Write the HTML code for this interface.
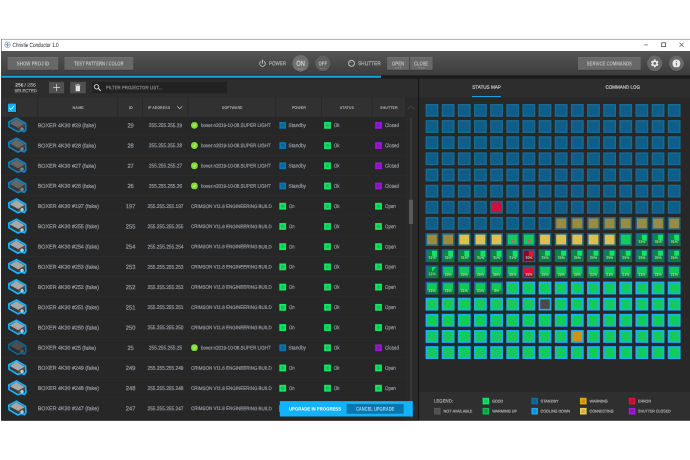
<!DOCTYPE html>
<html><head><meta charset="utf-8"><title>Christie Conductor 1.0</title>
<style>
html,body{margin:0;padding:0;background:#fff;}
body{width:690px;height:460px;overflow:hidden;}
svg#app{will-change:transform;display:block;position:absolute;left:0;top:0;font-family:"Liberation Sans",sans-serif;}
</style></head><body>
<svg id="app" width="690" height="460" viewBox="0 0 690 460">
<defs>
<linearGradient id="tbg" x1="0" y1="0" x2="0" y2="1"><stop offset="0" stop-color="#555555"/><stop offset="1" stop-color="#3c3c3c"/></linearGradient>
<linearGradient id="bandg" x1="0" y1="0" x2="0" y2="1"><stop offset="0" stop-color="#0a8038" stop-opacity="0"/><stop offset="0.5" stop-color="#0a7c36" stop-opacity="0.85"/><stop offset="1" stop-color="#097632"/></linearGradient>
<linearGradient id="bandr" x1="0" y1="0" x2="0" y2="1"><stop offset="0" stop-color="#860a24" stop-opacity="0"/><stop offset="0.5" stop-color="#800a22" stop-opacity="0.85"/><stop offset="1" stop-color="#780820"/></linearGradient>
</defs>
<g id="window">
<rect x="1.2" y="39" width="688.8" height="381.3" fill="#2b2b2b"/>
<rect x="1.2" y="39" width="688.8" height="12" fill="#ffffff"/>
<rect x="1.2" y="38.9" width="688.8" height="0.8" fill="#9a9a9a"/>
<rect x="1.1" y="39" width="0.5" height="381.3" fill="#555"/>
<g transform="translate(4.2 41.5) scale(0.33)"><circle cx="10" cy="10" r="8.6" fill="#fff" stroke="#4a9fd8" stroke-width="2"/><path d="M10 4v12M4 10h12" stroke="#5a5a9a" stroke-width="2.2"/><circle cx="10" cy="10" r="2.4" fill="#e0902a"/></g>
<text x="12.6" y="47" font-size="6.1" fill="#24242c" textLength="46" lengthAdjust="spacingAndGlyphs" transform="rotate(0.04 12.6 47)">Christie Conductor 1.0</text>
<g transform="translate(640 40)" fill="none" stroke-width="0.7"><path d="M4.2 4.9h3.6" stroke="#555"/><rect x="21.7" y="2.8" width="4" height="3.9" stroke="#333"/><path d="M39.5 2.7l4.2 4.2M43.7 2.7l-4.2 4.2" stroke="#222"/></g>
</g>
<g id="toolbar">
<rect x="1.2" y="51" width="688.8" height="24.5" fill="url(#tbg)"/>
<rect x="1.2" y="75.5" width="688.8" height="2.5" fill="#1b1b1b"/>
<rect x="1.2" y="75.7" width="379.8" height="2.1" fill="#12a5e6"/>
<rect x="7.6" y="69" width="50.6" height="1.35" fill="#303030"/>
<rect x="7.6" y="57.1" width="50.6" height="12.75" fill="#686868"/>
<rect x="7.6" y="57.1" width="50.6" height="0.6" fill="#7a7a7a"/>
<text x="16.8" y="65.5" font-size="5.8" fill="#bcbcbc" font-weight="bold" textLength="32.4" lengthAdjust="spacingAndGlyphs" transform="rotate(0.04 16.8 65.5)">SHOW PROJ ID</text>
<rect x="64.4" y="69" width="68.8" height="1.35" fill="#303030"/>
<rect x="64.4" y="57.1" width="68.8" height="12.75" fill="#686868"/>
<rect x="64.4" y="57.1" width="68.8" height="0.6" fill="#7a7a7a"/>
<text x="74" y="65.5" font-size="5.8" fill="#bcbcbc" font-weight="bold" textLength="49.6" lengthAdjust="spacingAndGlyphs" transform="rotate(0.04 74 65.5)">TEST PATTERN / COLOR</text>
<rect x="387.1" y="69" width="21.9" height="1.35" fill="#303030"/>
<rect x="387.1" y="57.1" width="21.9" height="12.75" fill="#686868"/>
<rect x="387.1" y="57.1" width="21.9" height="0.6" fill="#7a7a7a"/>
<text x="392" y="65.5" font-size="5.8" fill="#bcbcbc" font-weight="bold" textLength="12.2" lengthAdjust="spacingAndGlyphs" transform="rotate(0.04 392 65.5)">OPEN</text>
<rect x="395.3" y="67.5" width="1.2" height="0.85" fill="#a4a4a4"/>
<rect x="397.65" y="67.5" width="1.2" height="0.85" fill="#a4a4a4"/>
<rect x="400" y="67.5" width="1.2" height="0.85" fill="#a4a4a4"/>
<rect x="410.1" y="69" width="22.5" height="1.35" fill="#303030"/>
<rect x="410.1" y="57.1" width="22.5" height="12.75" fill="#686868"/>
<rect x="410.1" y="57.1" width="22.5" height="0.6" fill="#7a7a7a"/>
<text x="414" y="65.5" font-size="5.8" fill="#bcbcbc" font-weight="bold" textLength="14.1" lengthAdjust="spacingAndGlyphs" transform="rotate(0.04 414 65.5)">CLOSE</text>
<rect x="418.6" y="67.5" width="1.2" height="0.85" fill="#a4a4a4"/>
<rect x="420.95" y="67.5" width="1.2" height="0.85" fill="#a4a4a4"/>
<rect x="423.3" y="67.5" width="1.2" height="0.85" fill="#a4a4a4"/>
<rect x="578" y="69" width="62.7" height="1.35" fill="#303030"/>
<rect x="578" y="57.1" width="62.7" height="12.75" fill="#686868"/>
<rect x="578" y="57.1" width="62.7" height="0.6" fill="#7a7a7a"/>
<text x="586.8" y="65.5" font-size="5.8" fill="#bcbcbc" font-weight="bold" textLength="45" lengthAdjust="spacingAndGlyphs" transform="rotate(0.04 586.8 65.5)">SERVICE COMMANDS</text>
<g transform="translate(262.5 63.5)" fill="none" stroke="#d4d4d4" stroke-width="0.85" stroke-linecap="round"><path d="M-1.6 -2.3A2.85 2.85 0 1 0 1.6 -2.3"/><path d="M0 -3.4V-0.3"/></g>
<text x="268.9" y="65.33" font-size="5.6" fill="#a8a8a8" stroke="#a8a8a8" stroke-width="0.22" textLength="17.2" lengthAdjust="spacingAndGlyphs" transform="rotate(0.04 268.9 65.33)">POWER</text>
<circle cx="300.6" cy="63.9" r="8.5" fill="#2a2a2a" opacity="0.5"/>
<circle cx="300.6" cy="63.4" r="8.3" fill="#707070"/>
<text x="296.3" y="65.98" font-size="7.8" fill="#cccccc" font-weight="bold" textLength="8.7" lengthAdjust="spacingAndGlyphs" transform="rotate(0.04 296.3 65.98)">ON</text>
<rect x="298" y="68.5" width="1" height="0.8" fill="#999"/>
<rect x="300.1" y="68.5" width="1" height="0.8" fill="#999"/>
<rect x="302.2" y="68.5" width="1" height="0.8" fill="#999"/>
<circle cx="322.8" cy="63.9" r="8" fill="#2a2a2a" opacity="0.5"/>
<circle cx="322.8" cy="63.4" r="7.8" fill="#5f5f5f"/>
<text x="318.6" y="65.6" font-size="5.8" fill="#c4c4c4" font-weight="bold" textLength="8.4" lengthAdjust="spacingAndGlyphs" transform="rotate(0.04 318.6 65.6)">OFF</text>
<rect x="320.1" y="68.2" width="1" height="0.8" fill="#8a8a8a"/>
<rect x="322.3" y="68.2" width="1" height="0.8" fill="#8a8a8a"/>
<rect x="324.5" y="68.2" width="1" height="0.8" fill="#8a8a8a"/>
<circle cx="351.5" cy="63.35" r="3" fill="none" stroke="#d6d6d6" stroke-width="0.95"/><path d="M350.300 62.100l1.200 0.700" stroke="#d6d6d6" stroke-width="0.5"/>
<text x="357.9" y="65.19" font-size="5.5" fill="#a6a6a6" stroke="#a6a6a6" stroke-width="0.22" textLength="22.9" lengthAdjust="spacingAndGlyphs" transform="rotate(0.04 357.9 65.19)">SHUTTER</text>
<circle cx="654.75" cy="63.9" r="8" fill="#2a2a2a" opacity="0.5"/>
<circle cx="654.75" cy="63.4" r="7.8" fill="#686868"/>
<g transform="translate(649.95 58.6) scale(0.4)"><path fill="#e8e8e8" d="M19.14 12.94c.04-.3.06-.61.06-.94 0-.32-.02-.64-.07-.94l2.03-1.58a.49.49 0 0 0 .12-.61l-1.92-3.32a.488.488 0 0 0-.59-.22l-2.39.96c-.5-.38-1.03-.7-1.62-.94l-.36-2.54a.484.484 0 0 0-.48-.41h-3.84c-.24 0-.43.17-.47.41l-.36 2.54c-.59.24-1.13.57-1.62.94l-2.39-.96c-.22-.08-.47 0-.59.22L2.74 8.87c-.12.21-.08.47.12.61l2.03 1.58c-.05.3-.09.63-.09.94s.02.64.07.94l-2.03 1.58a.49.49 0 0 0-.12.61l1.92 3.32c.12.22.37.29.59.22l2.39-.96c.5.38 1.03.7 1.62.94l.36 2.54c.05.24.24.41.48.41h3.84c.24 0 .44-.17.47-.41l.36-2.54c.59-.24 1.13-.56 1.62-.94l2.39.96c.22.08.47 0 .59-.22l1.92-3.32c.12-.22.07-.47-.12-.61l-2.01-1.58zM12 15.6c-1.98 0-3.6-1.62-3.6-3.6s1.62-3.6 3.6-3.6 3.6 1.62 3.6 3.6-1.62 3.6-3.6 3.6z"/></g>
<circle cx="676.4" cy="63.9" r="7.9" fill="#2a2a2a" opacity="0.5"/>
<circle cx="676.4" cy="63.4" r="7.7" fill="#686868"/>
<circle cx="676.4" cy="63.4" r="3.9" fill="#e8e8e8"/>
<rect x="675.95" y="62.9" width="0.9" height="2.6" fill="#686868"/>
<rect x="675.95" y="61.2" width="0.9" height="0.9" fill="#686868"/>
</g>
<g id="projector-list">
<rect x="1.2" y="78" width="416.9" height="342.3" fill="#2d2d2d"/>
<text x="15.3" y="86.52" font-size="4.7" fill="#cfcfcf" font-weight="bold" textLength="8.1" lengthAdjust="spacingAndGlyphs" transform="rotate(0.04 15.3 86.52)">256</text>
<text x="24.5" y="86.52" font-size="4.7" fill="#9c9c9c" stroke="#9c9c9c" stroke-width="0.22" textLength="11.3" lengthAdjust="spacingAndGlyphs" transform="rotate(0.04 24.5 86.52)">/ 256</text>
<text x="14.4" y="92.28" font-size="4.6" fill="#9c9c9c" stroke="#9c9c9c" stroke-width="0.22" textLength="22.5" lengthAdjust="spacingAndGlyphs" transform="rotate(0.04 14.4 92.28)">SELECTED</text>
<rect x="49.05" y="81.9" width="15.05" height="11.4" fill="#505050"/>
<rect x="53.1" y="87.25" width="7" height="0.75" fill="#dcdcdc"/>
<rect x="56.22" y="84.1" width="0.75" height="7.1" fill="#dcdcdc"/>
<rect x="70.2" y="81.9" width="15.6" height="11.4" fill="#505050"/>
<path transform="translate(74.9 84.3) scale(0.485 0.46)" fill="#e0e0e0" d="M1.5 3.5h9v10.300q0 1.200-1.200 1.200h-6.600q-1.200 0-1.200-1.200zM0.600 1.200h3.200l0.700-1.200h3l0.700 1.200h3.200v1.500h-10.800z"/>
<rect x="92.2" y="82.2" width="134.7" height="10.9" fill="#222222"/>
<g transform="translate(93.3 83.5) scale(0.58)" fill="none" stroke="#e8e8e8"><circle cx="5.6" cy="5.6" r="3.9" stroke-width="1.5"/><path d="M8.600 8.600l4.200 4.200" stroke-width="1.8"/></g>
<text x="106.1" y="89.15" font-size="4.8" fill="#7e8084" stroke="#7e8084" stroke-width="0.22" textLength="55.9" lengthAdjust="spacingAndGlyphs" transform="rotate(0.04 106.1 89.15)">FILTER PROJECTOR LIST...</text>
<rect x="1.2" y="97.4" width="404" height="19.6" fill="#313131"/>
<rect x="37.3" y="97.4" width="0.8" height="19.6" fill="#282828"/>
<rect x="117.3" y="97.4" width="0.8" height="19.6" fill="#282828"/>
<rect x="142.1" y="97.4" width="0.8" height="19.6" fill="#282828"/>
<rect x="187.7" y="97.4" width="0.8" height="19.6" fill="#282828"/>
<rect x="275.25" y="97.4" width="0.8" height="19.6" fill="#282828"/>
<rect x="321" y="97.4" width="0.8" height="19.6" fill="#282828"/>
<rect x="371.8" y="97.4" width="0.8" height="19.6" fill="#282828"/>
<rect x="7.2" y="102.9" width="9.4" height="9.7" fill="#221a18" rx="1"/>
<rect x="7.8" y="103.5" width="8.2" height="8.5" fill="#14aef6" rx="0.6"/>
<path d="M9.200 108.100L11.100 109.500L14 105.800" stroke="#fff" stroke-width="1" fill="none"/>
<text x="72.6" y="109.03" font-size="4" fill="#aaaaaa" font-weight="bold" textLength="11.3" lengthAdjust="spacingAndGlyphs" transform="rotate(0.04 72.6 109.03)">NAME</text>
<text x="128.9" y="109.03" font-size="4" fill="#aaaaaa" font-weight="bold" textLength="3.8" lengthAdjust="spacingAndGlyphs" transform="rotate(0.04 128.9 109.03)">ID</text>
<text x="147.9" y="109.03" font-size="4" fill="#aaaaaa" font-weight="bold" textLength="22.2" lengthAdjust="spacingAndGlyphs" transform="rotate(0.04 147.9 109.03)">IP ADDRESS</text>
<path d="M177.400 106.300l2.350 2.500 2.350-2.500" stroke="#d8d8d8" stroke-width="0.85" fill="none"/>
<text x="221.7" y="109.03" font-size="4" fill="#aaaaaa" font-weight="bold" textLength="20.9" lengthAdjust="spacingAndGlyphs" transform="rotate(0.04 221.7 109.03)">SOFTWARE</text>
<text x="291.9" y="109.03" font-size="4" fill="#aaaaaa" font-weight="bold" textLength="14" lengthAdjust="spacingAndGlyphs" transform="rotate(0.04 291.9 109.03)">POWER</text>
<text x="339.7" y="109.03" font-size="4" fill="#aaaaaa" font-weight="bold" textLength="14.2" lengthAdjust="spacingAndGlyphs" transform="rotate(0.04 339.7 109.03)">STATUS</text>
<text x="380" y="109.03" font-size="4" fill="#aaaaaa" font-weight="bold" textLength="17.7" lengthAdjust="spacingAndGlyphs" transform="rotate(0.04 380 109.03)">SHUTTER</text>
<rect x="1.2" y="117" width="404" height="303.3" fill="#272727"/>
<rect x="405.2" y="97.4" width="12.9" height="322.9" fill="#2a2a2a"/>
<rect x="410.5" y="117.4" width="1.2" height="301.4" fill="#424242"/>
<rect x="409" y="199.8" width="4" height="24.2" fill="#595959"/>
<path d="M407.600 109.700l3.700-3.800 3.700 3.800" stroke="#565656" stroke-width="0.7" fill="none"/>
<g id="row-29">
<g transform="translate(0 125.5)"><path d="M16.5 -7.3L25.4 -2.1L25.8 3.9L24.4 6.1L21.3 4.9L17.9 6.3L9.1 1.1L8.9 -3.3Z" fill="#232323" stroke="#1180b8" stroke-width="1.9" stroke-linejoin="round"/><path d="M9.7 -2.2L18.1 2.5L18.1 5.3L9.8 0.7Z" fill="#363636"/><path d="M18.1 2.5L24.6 -1.4L24.6 1.3L18.1 5.3Z" fill="#424242"/><path d="M16.3 -6.3L24.6 -1.4L18.1 2.5L9.7 -2.2Z" fill="#666666"/><circle cx="22.1" cy="3.4" r="1.75" fill="#888888"/><circle cx="22.8" cy="3.9" r="0.8" fill="#1180b8" opacity="0.5"/></g>
<text x="37.8" y="127.19" font-size="5.5" fill="#8d9197" stroke="#8d9197" stroke-width="0.22" textLength="58.2" lengthAdjust="spacingAndGlyphs" transform="rotate(0.04 37.8 127.19)">BOXER 4K30 #29 (fake)</text>
<text x="127.4" y="127.46" font-size="6" fill="#8d9197" stroke="#8d9197" stroke-width="0.22" textLength="6.4" lengthAdjust="spacingAndGlyphs" transform="rotate(0.04 127.4 127.46)">29</text>
<text x="148.8" y="127.12" font-size="5.3" fill="#8d9197" stroke="#8d9197" stroke-width="0.22" textLength="33.4" lengthAdjust="spacingAndGlyphs" transform="rotate(0.04 148.8 127.12)">255.255.255.29</text>
<circle cx="194.4" cy="125.3" r="4.1" fill="#1d1a20"/>
<circle cx="194.4" cy="125.3" r="3.4" fill="#84dc36"/>
<path transform="translate(192.3 123.15) scale(0.35)" d="M2.600 6.400l2.300 2.300 4.500-5.200" stroke="#eefbe0" stroke-width="1.9" fill="none"/>
<text x="201" y="127.09" font-size="5.2" fill="#8d9197" stroke="#8d9197" stroke-width="0.22" textLength="69.9" lengthAdjust="spacingAndGlyphs" transform="rotate(0.04 201 127.09)">boxer.n2019-10-08.SUPER LIGHT</text>
<rect x="279.3" y="121.95" width="6.8" height="6.8" fill="#1074a8"/>
<rect x="281" y="123.65" width="3.4" height="3.4" fill="#0d6392"/>
<text x="288.6" y="127.06" font-size="5.4" fill="#8d9197" stroke="#8d9197" stroke-width="0.22" textLength="17.4" lengthAdjust="spacingAndGlyphs" transform="rotate(0.04 288.6 127.06)">Standby</text>
<rect x="324.1" y="121.95" width="6.8" height="6.8" fill="#14e666"/>
<rect x="325.8" y="123.65" width="3.4" height="3.4" fill="#11c458"/>
<text x="333.8" y="127.06" font-size="5.4" fill="#8d9197" stroke="#8d9197" stroke-width="0.22" textLength="5.7" lengthAdjust="spacingAndGlyphs" transform="rotate(0.04 333.8 127.06)">Ok</text>
<rect x="375.1" y="121.95" width="6.8" height="6.8" fill="#9a18d8"/>
<rect x="376.8" y="123.65" width="3.4" height="3.4" fill="#8414bc"/>
<text x="385" y="127.06" font-size="5.4" fill="#8d9197" stroke="#8d9197" stroke-width="0.22" textLength="13.9" lengthAdjust="spacingAndGlyphs" transform="rotate(0.04 385 127.06)">Closed</text>
</g>
<g id="row-28">
<rect x="1.2" y="134.76" width="404" height="0.6" fill="#2f2f2f"/>
<g transform="translate(0 145.72)"><path d="M16.5 -7.3L25.4 -2.1L25.8 3.9L24.4 6.1L21.3 4.9L17.9 6.3L9.1 1.1L8.9 -3.3Z" fill="#232323" stroke="#1180b8" stroke-width="1.9" stroke-linejoin="round"/><path d="M9.7 -2.2L18.1 2.5L18.1 5.3L9.8 0.7Z" fill="#363636"/><path d="M18.1 2.5L24.6 -1.4L24.6 1.3L18.1 5.3Z" fill="#424242"/><path d="M16.3 -6.3L24.6 -1.4L18.1 2.5L9.7 -2.2Z" fill="#666666"/><circle cx="22.1" cy="3.4" r="1.75" fill="#888888"/><circle cx="22.8" cy="3.9" r="0.8" fill="#1180b8" opacity="0.5"/></g>
<text x="37.8" y="147.41" font-size="5.5" fill="#8d9197" stroke="#8d9197" stroke-width="0.22" textLength="58.2" lengthAdjust="spacingAndGlyphs" transform="rotate(0.04 37.8 147.41)">BOXER 4K30 #28 (fake)</text>
<text x="127.4" y="147.68" font-size="6" fill="#8d9197" stroke="#8d9197" stroke-width="0.22" textLength="6.4" lengthAdjust="spacingAndGlyphs" transform="rotate(0.04 127.4 147.68)">28</text>
<text x="148.8" y="147.34" font-size="5.3" fill="#8d9197" stroke="#8d9197" stroke-width="0.22" textLength="33.4" lengthAdjust="spacingAndGlyphs" transform="rotate(0.04 148.8 147.34)">255.255.255.28</text>
<circle cx="194.4" cy="145.52" r="4.1" fill="#1d1a20"/>
<circle cx="194.4" cy="145.52" r="3.4" fill="#84dc36"/>
<path transform="translate(192.3 143.37) scale(0.35)" d="M2.600 6.400l2.300 2.300 4.500-5.200" stroke="#eefbe0" stroke-width="1.9" fill="none"/>
<text x="201" y="147.31" font-size="5.2" fill="#8d9197" stroke="#8d9197" stroke-width="0.22" textLength="69.9" lengthAdjust="spacingAndGlyphs" transform="rotate(0.04 201 147.31)">boxer.n2019-10-08.SUPER LIGHT</text>
<rect x="279.3" y="142.17" width="6.8" height="6.8" fill="#1074a8"/>
<rect x="281" y="143.87" width="3.4" height="3.4" fill="#0d6392"/>
<text x="288.6" y="147.28" font-size="5.4" fill="#8d9197" stroke="#8d9197" stroke-width="0.22" textLength="17.4" lengthAdjust="spacingAndGlyphs" transform="rotate(0.04 288.6 147.28)">Standby</text>
<rect x="324.1" y="142.17" width="6.8" height="6.8" fill="#14e666"/>
<rect x="325.8" y="143.87" width="3.4" height="3.4" fill="#11c458"/>
<text x="333.8" y="147.28" font-size="5.4" fill="#8d9197" stroke="#8d9197" stroke-width="0.22" textLength="5.7" lengthAdjust="spacingAndGlyphs" transform="rotate(0.04 333.8 147.28)">Ok</text>
<rect x="375.1" y="142.17" width="6.8" height="6.8" fill="#9a18d8"/>
<rect x="376.8" y="143.87" width="3.4" height="3.4" fill="#8414bc"/>
<text x="385" y="147.28" font-size="5.4" fill="#8d9197" stroke="#8d9197" stroke-width="0.22" textLength="13.9" lengthAdjust="spacingAndGlyphs" transform="rotate(0.04 385 147.28)">Closed</text>
</g>
<g id="row-27">
<rect x="1.2" y="154.98" width="404" height="0.6" fill="#2f2f2f"/>
<g transform="translate(0 165.94)"><path d="M16.5 -7.3L25.4 -2.1L25.8 3.9L24.4 6.1L21.3 4.9L17.9 6.3L9.1 1.1L8.9 -3.3Z" fill="#232323" stroke="#1180b8" stroke-width="1.9" stroke-linejoin="round"/><path d="M9.7 -2.2L18.1 2.5L18.1 5.3L9.8 0.7Z" fill="#363636"/><path d="M18.1 2.5L24.6 -1.4L24.6 1.3L18.1 5.3Z" fill="#424242"/><path d="M16.3 -6.3L24.6 -1.4L18.1 2.5L9.7 -2.2Z" fill="#666666"/><circle cx="22.1" cy="3.4" r="1.75" fill="#888888"/><circle cx="22.8" cy="3.9" r="0.8" fill="#1180b8" opacity="0.5"/></g>
<text x="37.8" y="167.63" font-size="5.5" fill="#8d9197" stroke="#8d9197" stroke-width="0.22" textLength="58.2" lengthAdjust="spacingAndGlyphs" transform="rotate(0.04 37.8 167.63)">BOXER 4K30 #27 (fake)</text>
<text x="127.4" y="167.9" font-size="6" fill="#8d9197" stroke="#8d9197" stroke-width="0.22" textLength="6.4" lengthAdjust="spacingAndGlyphs" transform="rotate(0.04 127.4 167.9)">27</text>
<text x="148.8" y="167.56" font-size="5.3" fill="#8d9197" stroke="#8d9197" stroke-width="0.22" textLength="33.4" lengthAdjust="spacingAndGlyphs" transform="rotate(0.04 148.8 167.56)">255.255.255.27</text>
<circle cx="194.4" cy="165.74" r="4.1" fill="#1d1a20"/>
<circle cx="194.4" cy="165.74" r="3.4" fill="#84dc36"/>
<path transform="translate(192.3 163.59) scale(0.35)" d="M2.600 6.400l2.300 2.300 4.500-5.200" stroke="#eefbe0" stroke-width="1.9" fill="none"/>
<text x="201" y="167.53" font-size="5.2" fill="#8d9197" stroke="#8d9197" stroke-width="0.22" textLength="69.9" lengthAdjust="spacingAndGlyphs" transform="rotate(0.04 201 167.53)">boxer.n2019-10-08.SUPER LIGHT</text>
<rect x="279.3" y="162.39" width="6.8" height="6.8" fill="#1074a8"/>
<rect x="281" y="164.09" width="3.4" height="3.4" fill="#0d6392"/>
<text x="288.6" y="167.5" font-size="5.4" fill="#8d9197" stroke="#8d9197" stroke-width="0.22" textLength="17.4" lengthAdjust="spacingAndGlyphs" transform="rotate(0.04 288.6 167.5)">Standby</text>
<rect x="324.1" y="162.39" width="6.8" height="6.8" fill="#14e666"/>
<rect x="325.8" y="164.09" width="3.4" height="3.4" fill="#11c458"/>
<text x="333.8" y="167.5" font-size="5.4" fill="#8d9197" stroke="#8d9197" stroke-width="0.22" textLength="5.7" lengthAdjust="spacingAndGlyphs" transform="rotate(0.04 333.8 167.5)">Ok</text>
<rect x="375.1" y="162.39" width="6.8" height="6.8" fill="#9a18d8"/>
<rect x="376.8" y="164.09" width="3.4" height="3.4" fill="#8414bc"/>
<text x="385" y="167.5" font-size="5.4" fill="#8d9197" stroke="#8d9197" stroke-width="0.22" textLength="13.9" lengthAdjust="spacingAndGlyphs" transform="rotate(0.04 385 167.5)">Closed</text>
</g>
<g id="row-26">
<rect x="1.2" y="175.2" width="404" height="0.6" fill="#2f2f2f"/>
<g transform="translate(0 186.16)"><path d="M16.5 -7.3L25.4 -2.1L25.8 3.9L24.4 6.1L21.3 4.9L17.9 6.3L9.1 1.1L8.9 -3.3Z" fill="#232323" stroke="#1180b8" stroke-width="1.9" stroke-linejoin="round"/><path d="M9.7 -2.2L18.1 2.5L18.1 5.3L9.8 0.7Z" fill="#363636"/><path d="M18.1 2.5L24.6 -1.4L24.6 1.3L18.1 5.3Z" fill="#424242"/><path d="M16.3 -6.3L24.6 -1.4L18.1 2.5L9.7 -2.2Z" fill="#666666"/><circle cx="22.1" cy="3.4" r="1.75" fill="#888888"/><circle cx="22.8" cy="3.9" r="0.8" fill="#1180b8" opacity="0.5"/></g>
<text x="37.8" y="187.85" font-size="5.5" fill="#8d9197" stroke="#8d9197" stroke-width="0.22" textLength="58.2" lengthAdjust="spacingAndGlyphs" transform="rotate(0.04 37.8 187.85)">BOXER 4K30 #26 (fake)</text>
<text x="127.4" y="188.12" font-size="6" fill="#8d9197" stroke="#8d9197" stroke-width="0.22" textLength="6.4" lengthAdjust="spacingAndGlyphs" transform="rotate(0.04 127.4 188.12)">26</text>
<text x="148.8" y="187.78" font-size="5.3" fill="#8d9197" stroke="#8d9197" stroke-width="0.22" textLength="33.4" lengthAdjust="spacingAndGlyphs" transform="rotate(0.04 148.8 187.78)">255.255.255.26</text>
<circle cx="194.4" cy="185.96" r="4.1" fill="#1d1a20"/>
<circle cx="194.4" cy="185.96" r="3.4" fill="#84dc36"/>
<path transform="translate(192.3 183.81) scale(0.35)" d="M2.600 6.400l2.300 2.300 4.500-5.200" stroke="#eefbe0" stroke-width="1.9" fill="none"/>
<text x="201" y="187.75" font-size="5.2" fill="#8d9197" stroke="#8d9197" stroke-width="0.22" textLength="69.9" lengthAdjust="spacingAndGlyphs" transform="rotate(0.04 201 187.75)">boxer.n2019-10-08.SUPER LIGHT</text>
<rect x="279.3" y="182.61" width="6.8" height="6.8" fill="#1074a8"/>
<rect x="281" y="184.31" width="3.4" height="3.4" fill="#0d6392"/>
<text x="288.6" y="187.72" font-size="5.4" fill="#8d9197" stroke="#8d9197" stroke-width="0.22" textLength="17.4" lengthAdjust="spacingAndGlyphs" transform="rotate(0.04 288.6 187.72)">Standby</text>
<rect x="324.1" y="182.61" width="6.8" height="6.8" fill="#14e666"/>
<rect x="325.8" y="184.31" width="3.4" height="3.4" fill="#11c458"/>
<text x="333.8" y="187.72" font-size="5.4" fill="#8d9197" stroke="#8d9197" stroke-width="0.22" textLength="5.7" lengthAdjust="spacingAndGlyphs" transform="rotate(0.04 333.8 187.72)">Ok</text>
<rect x="375.1" y="182.61" width="6.8" height="6.8" fill="#9a18d8"/>
<rect x="376.8" y="184.31" width="3.4" height="3.4" fill="#8414bc"/>
<text x="385" y="187.72" font-size="5.4" fill="#8d9197" stroke="#8d9197" stroke-width="0.22" textLength="13.9" lengthAdjust="spacingAndGlyphs" transform="rotate(0.04 385 187.72)">Closed</text>
</g>
<g id="row-197">
<rect x="1.2" y="195.42" width="404" height="0.6" fill="#2f2f2f"/>
<g transform="translate(0 206.38)"><path d="M16.5 -7.3L25.4 -2.1L25.8 3.9L24.4 6.1L21.3 4.9L17.9 6.3L9.1 1.1L8.9 -3.3Z" fill="#232323" stroke="#18b2fa" stroke-width="1.9" stroke-linejoin="round"/><path d="M9.7 -2.2L18.1 2.5L18.1 5.3L9.8 0.7Z" fill="#3c3c3c"/><path d="M18.1 2.5L24.6 -1.4L24.6 1.3L18.1 5.3Z" fill="#505050"/><path d="M16.3 -6.3L24.6 -1.4L18.1 2.5L9.7 -2.2Z" fill="#a8a8a8"/><circle cx="22.1" cy="3.4" r="1.75" fill="#cfcfcf"/><circle cx="22.8" cy="3.9" r="0.8" fill="#18b2fa" opacity="0.5"/></g>
<text x="37.8" y="208.07" font-size="5.5" fill="#8d9197" stroke="#8d9197" stroke-width="0.22" textLength="61.17" lengthAdjust="spacingAndGlyphs" transform="rotate(0.04 37.8 208.07)">BOXER 4K30 #197 (fake)</text>
<text x="125.8" y="208.34" font-size="6" fill="#8d9197" stroke="#8d9197" stroke-width="0.22" textLength="9.6" lengthAdjust="spacingAndGlyphs" transform="rotate(0.04 125.8 208.34)">197</text>
<text x="147.46" y="208" font-size="5.3" fill="#8d9197" stroke="#8d9197" stroke-width="0.22" textLength="36.07" lengthAdjust="spacingAndGlyphs" transform="rotate(0.04 147.46 208)">255.255.255.197</text>
<text x="191.1" y="207.9" font-size="5" fill="#8d9197" stroke="#8d9197" stroke-width="0.22" textLength="80.7" lengthAdjust="spacingAndGlyphs" transform="rotate(0.04 191.1 207.9)">CRIMSON V11.8 ENGINEERING BUILD</text>
<rect x="279.3" y="202.83" width="6.8" height="6.8" fill="#14e666"/>
<rect x="281" y="204.53" width="3.4" height="3.4" fill="#11c458"/>
<text x="288.9" y="207.94" font-size="5.4" fill="#8d9197" stroke="#8d9197" stroke-width="0.22" textLength="5.6" lengthAdjust="spacingAndGlyphs" transform="rotate(0.04 288.9 207.94)">On</text>
<rect x="324.1" y="202.83" width="6.8" height="6.8" fill="#14e666"/>
<rect x="325.8" y="204.53" width="3.4" height="3.4" fill="#11c458"/>
<text x="333.8" y="207.94" font-size="5.4" fill="#8d9197" stroke="#8d9197" stroke-width="0.22" textLength="5.7" lengthAdjust="spacingAndGlyphs" transform="rotate(0.04 333.8 207.94)">Ok</text>
<rect x="375.1" y="202.83" width="6.8" height="6.8" fill="#14e666"/>
<rect x="376.8" y="204.53" width="3.4" height="3.4" fill="#11c458"/>
<text x="385" y="207.94" font-size="5.4" fill="#8d9197" stroke="#8d9197" stroke-width="0.22" textLength="10.8" lengthAdjust="spacingAndGlyphs" transform="rotate(0.04 385 207.94)">Open</text>
</g>
<g id="row-255">
<rect x="1.2" y="215.64" width="404" height="0.6" fill="#2f2f2f"/>
<g transform="translate(0 226.6)"><path d="M16.5 -7.3L25.4 -2.1L25.8 3.9L24.4 6.1L21.3 4.9L17.9 6.3L9.1 1.1L8.9 -3.3Z" fill="#232323" stroke="#18b2fa" stroke-width="1.9" stroke-linejoin="round"/><path d="M9.7 -2.2L18.1 2.5L18.1 5.3L9.8 0.7Z" fill="#3c3c3c"/><path d="M18.1 2.5L24.6 -1.4L24.6 1.3L18.1 5.3Z" fill="#505050"/><path d="M16.3 -6.3L24.6 -1.4L18.1 2.5L9.7 -2.2Z" fill="#a8a8a8"/><circle cx="22.1" cy="3.4" r="1.75" fill="#cfcfcf"/><circle cx="22.8" cy="3.9" r="0.8" fill="#18b2fa" opacity="0.5"/></g>
<text x="37.8" y="228.29" font-size="5.5" fill="#8d9197" stroke="#8d9197" stroke-width="0.22" textLength="61.17" lengthAdjust="spacingAndGlyphs" transform="rotate(0.04 37.8 228.29)">BOXER 4K30 #255 (fake)</text>
<text x="125.8" y="228.56" font-size="6" fill="#8d9197" stroke="#8d9197" stroke-width="0.22" textLength="9.6" lengthAdjust="spacingAndGlyphs" transform="rotate(0.04 125.8 228.56)">255</text>
<text x="147.46" y="228.22" font-size="5.3" fill="#8d9197" stroke="#8d9197" stroke-width="0.22" textLength="36.07" lengthAdjust="spacingAndGlyphs" transform="rotate(0.04 147.46 228.22)">255.255.255.255</text>
<text x="191.1" y="228.12" font-size="5" fill="#8d9197" stroke="#8d9197" stroke-width="0.22" textLength="80.7" lengthAdjust="spacingAndGlyphs" transform="rotate(0.04 191.1 228.12)">CRIMSON V11.8 ENGINEERING BUILD</text>
<rect x="279.3" y="223.05" width="6.8" height="6.8" fill="#14e666"/>
<rect x="281" y="224.75" width="3.4" height="3.4" fill="#11c458"/>
<text x="288.9" y="228.16" font-size="5.4" fill="#8d9197" stroke="#8d9197" stroke-width="0.22" textLength="5.6" lengthAdjust="spacingAndGlyphs" transform="rotate(0.04 288.9 228.16)">On</text>
<rect x="324.1" y="223.05" width="6.8" height="6.8" fill="#14e666"/>
<rect x="325.8" y="224.75" width="3.4" height="3.4" fill="#11c458"/>
<text x="333.8" y="228.16" font-size="5.4" fill="#8d9197" stroke="#8d9197" stroke-width="0.22" textLength="5.7" lengthAdjust="spacingAndGlyphs" transform="rotate(0.04 333.8 228.16)">Ok</text>
<rect x="375.1" y="223.05" width="6.8" height="6.8" fill="#14e666"/>
<rect x="376.8" y="224.75" width="3.4" height="3.4" fill="#11c458"/>
<text x="385" y="228.16" font-size="5.4" fill="#8d9197" stroke="#8d9197" stroke-width="0.22" textLength="10.8" lengthAdjust="spacingAndGlyphs" transform="rotate(0.04 385 228.16)">Open</text>
</g>
<g id="row-254">
<rect x="1.2" y="235.86" width="404" height="0.6" fill="#2f2f2f"/>
<g transform="translate(0 246.82)"><path d="M16.5 -7.3L25.4 -2.1L25.8 3.9L24.4 6.1L21.3 4.9L17.9 6.3L9.1 1.1L8.9 -3.3Z" fill="#232323" stroke="#18b2fa" stroke-width="1.9" stroke-linejoin="round"/><path d="M9.7 -2.2L18.1 2.5L18.1 5.3L9.8 0.7Z" fill="#3c3c3c"/><path d="M18.1 2.5L24.6 -1.4L24.6 1.3L18.1 5.3Z" fill="#505050"/><path d="M16.3 -6.3L24.6 -1.4L18.1 2.5L9.7 -2.2Z" fill="#a8a8a8"/><circle cx="22.1" cy="3.4" r="1.75" fill="#cfcfcf"/><circle cx="22.8" cy="3.9" r="0.8" fill="#18b2fa" opacity="0.5"/></g>
<text x="37.8" y="248.51" font-size="5.5" fill="#8d9197" stroke="#8d9197" stroke-width="0.22" textLength="61.17" lengthAdjust="spacingAndGlyphs" transform="rotate(0.04 37.8 248.51)">BOXER 4K30 #254 (fake)</text>
<text x="125.8" y="248.78" font-size="6" fill="#8d9197" stroke="#8d9197" stroke-width="0.22" textLength="9.6" lengthAdjust="spacingAndGlyphs" transform="rotate(0.04 125.8 248.78)">254</text>
<text x="147.46" y="248.44" font-size="5.3" fill="#8d9197" stroke="#8d9197" stroke-width="0.22" textLength="36.07" lengthAdjust="spacingAndGlyphs" transform="rotate(0.04 147.46 248.44)">255.255.255.254</text>
<text x="191.1" y="248.34" font-size="5" fill="#8d9197" stroke="#8d9197" stroke-width="0.22" textLength="80.7" lengthAdjust="spacingAndGlyphs" transform="rotate(0.04 191.1 248.34)">CRIMSON V11.8 ENGINEERING BUILD</text>
<rect x="279.3" y="243.27" width="6.8" height="6.8" fill="#14e666"/>
<rect x="281" y="244.97" width="3.4" height="3.4" fill="#11c458"/>
<text x="288.9" y="248.38" font-size="5.4" fill="#8d9197" stroke="#8d9197" stroke-width="0.22" textLength="5.6" lengthAdjust="spacingAndGlyphs" transform="rotate(0.04 288.9 248.38)">On</text>
<rect x="324.1" y="243.27" width="6.8" height="6.8" fill="#14e666"/>
<rect x="325.8" y="244.97" width="3.4" height="3.4" fill="#11c458"/>
<text x="333.8" y="248.38" font-size="5.4" fill="#8d9197" stroke="#8d9197" stroke-width="0.22" textLength="5.7" lengthAdjust="spacingAndGlyphs" transform="rotate(0.04 333.8 248.38)">Ok</text>
<rect x="375.1" y="243.27" width="6.8" height="6.8" fill="#14e666"/>
<rect x="376.8" y="244.97" width="3.4" height="3.4" fill="#11c458"/>
<text x="385" y="248.38" font-size="5.4" fill="#8d9197" stroke="#8d9197" stroke-width="0.22" textLength="10.8" lengthAdjust="spacingAndGlyphs" transform="rotate(0.04 385 248.38)">Open</text>
</g>
<g id="row-253">
<rect x="1.2" y="256.08" width="404" height="0.6" fill="#2f2f2f"/>
<g transform="translate(0 267.04)"><path d="M16.5 -7.3L25.4 -2.1L25.8 3.9L24.4 6.1L21.3 4.9L17.9 6.3L9.1 1.1L8.9 -3.3Z" fill="#232323" stroke="#18b2fa" stroke-width="1.9" stroke-linejoin="round"/><path d="M9.7 -2.2L18.1 2.5L18.1 5.3L9.8 0.7Z" fill="#3c3c3c"/><path d="M18.1 2.5L24.6 -1.4L24.6 1.3L18.1 5.3Z" fill="#505050"/><path d="M16.3 -6.3L24.6 -1.4L18.1 2.5L9.7 -2.2Z" fill="#a8a8a8"/><circle cx="22.1" cy="3.4" r="1.75" fill="#cfcfcf"/><circle cx="22.8" cy="3.9" r="0.8" fill="#18b2fa" opacity="0.5"/></g>
<text x="37.8" y="268.73" font-size="5.5" fill="#8d9197" stroke="#8d9197" stroke-width="0.22" textLength="61.17" lengthAdjust="spacingAndGlyphs" transform="rotate(0.04 37.8 268.73)">BOXER 4K30 #253 (fake)</text>
<text x="125.8" y="269" font-size="6" fill="#8d9197" stroke="#8d9197" stroke-width="0.22" textLength="9.6" lengthAdjust="spacingAndGlyphs" transform="rotate(0.04 125.8 269)">253</text>
<text x="147.46" y="268.66" font-size="5.3" fill="#8d9197" stroke="#8d9197" stroke-width="0.22" textLength="36.07" lengthAdjust="spacingAndGlyphs" transform="rotate(0.04 147.46 268.66)">255.255.255.253</text>
<text x="191.1" y="268.56" font-size="5" fill="#8d9197" stroke="#8d9197" stroke-width="0.22" textLength="80.7" lengthAdjust="spacingAndGlyphs" transform="rotate(0.04 191.1 268.56)">CRIMSON V11.8 ENGINEERING BUILD</text>
<rect x="279.3" y="263.49" width="6.8" height="6.8" fill="#14e666"/>
<rect x="281" y="265.19" width="3.4" height="3.4" fill="#11c458"/>
<text x="288.9" y="268.6" font-size="5.4" fill="#8d9197" stroke="#8d9197" stroke-width="0.22" textLength="5.6" lengthAdjust="spacingAndGlyphs" transform="rotate(0.04 288.9 268.6)">On</text>
<rect x="324.1" y="263.49" width="6.8" height="6.8" fill="#14e666"/>
<rect x="325.8" y="265.19" width="3.4" height="3.4" fill="#11c458"/>
<text x="333.8" y="268.6" font-size="5.4" fill="#8d9197" stroke="#8d9197" stroke-width="0.22" textLength="5.7" lengthAdjust="spacingAndGlyphs" transform="rotate(0.04 333.8 268.6)">Ok</text>
<rect x="375.1" y="263.49" width="6.8" height="6.8" fill="#14e666"/>
<rect x="376.8" y="265.19" width="3.4" height="3.4" fill="#11c458"/>
<text x="385" y="268.6" font-size="5.4" fill="#8d9197" stroke="#8d9197" stroke-width="0.22" textLength="10.8" lengthAdjust="spacingAndGlyphs" transform="rotate(0.04 385 268.6)">Open</text>
</g>
<g id="row-252">
<rect x="1.2" y="276.3" width="404" height="0.6" fill="#2f2f2f"/>
<g transform="translate(0 287.26)"><path d="M16.5 -7.3L25.4 -2.1L25.8 3.9L24.4 6.1L21.3 4.9L17.9 6.3L9.1 1.1L8.9 -3.3Z" fill="#232323" stroke="#18b2fa" stroke-width="1.9" stroke-linejoin="round"/><path d="M9.7 -2.2L18.1 2.5L18.1 5.3L9.8 0.7Z" fill="#3c3c3c"/><path d="M18.1 2.5L24.6 -1.4L24.6 1.3L18.1 5.3Z" fill="#505050"/><path d="M16.3 -6.3L24.6 -1.4L18.1 2.5L9.7 -2.2Z" fill="#a8a8a8"/><circle cx="22.1" cy="3.4" r="1.75" fill="#cfcfcf"/><circle cx="22.8" cy="3.9" r="0.8" fill="#18b2fa" opacity="0.5"/></g>
<text x="37.8" y="288.95" font-size="5.5" fill="#8d9197" stroke="#8d9197" stroke-width="0.22" textLength="61.17" lengthAdjust="spacingAndGlyphs" transform="rotate(0.04 37.8 288.95)">BOXER 4K30 #252 (fake)</text>
<text x="125.8" y="289.22" font-size="6" fill="#8d9197" stroke="#8d9197" stroke-width="0.22" textLength="9.6" lengthAdjust="spacingAndGlyphs" transform="rotate(0.04 125.8 289.22)">252</text>
<text x="147.46" y="288.88" font-size="5.3" fill="#8d9197" stroke="#8d9197" stroke-width="0.22" textLength="36.07" lengthAdjust="spacingAndGlyphs" transform="rotate(0.04 147.46 288.88)">255.255.255.252</text>
<text x="191.1" y="288.78" font-size="5" fill="#8d9197" stroke="#8d9197" stroke-width="0.22" textLength="80.7" lengthAdjust="spacingAndGlyphs" transform="rotate(0.04 191.1 288.78)">CRIMSON V11.8 ENGINEERING BUILD</text>
<rect x="279.3" y="283.71" width="6.8" height="6.8" fill="#14e666"/>
<rect x="281" y="285.41" width="3.4" height="3.4" fill="#11c458"/>
<text x="288.9" y="288.82" font-size="5.4" fill="#8d9197" stroke="#8d9197" stroke-width="0.22" textLength="5.6" lengthAdjust="spacingAndGlyphs" transform="rotate(0.04 288.9 288.82)">On</text>
<rect x="324.1" y="283.71" width="6.8" height="6.8" fill="#14e666"/>
<rect x="325.8" y="285.41" width="3.4" height="3.4" fill="#11c458"/>
<text x="333.8" y="288.82" font-size="5.4" fill="#8d9197" stroke="#8d9197" stroke-width="0.22" textLength="5.7" lengthAdjust="spacingAndGlyphs" transform="rotate(0.04 333.8 288.82)">Ok</text>
<rect x="375.1" y="283.71" width="6.8" height="6.8" fill="#14e666"/>
<rect x="376.8" y="285.41" width="3.4" height="3.4" fill="#11c458"/>
<text x="385" y="288.82" font-size="5.4" fill="#8d9197" stroke="#8d9197" stroke-width="0.22" textLength="10.8" lengthAdjust="spacingAndGlyphs" transform="rotate(0.04 385 288.82)">Open</text>
</g>
<g id="row-251">
<rect x="1.2" y="296.52" width="404" height="0.6" fill="#2f2f2f"/>
<g transform="translate(0 307.48)"><path d="M16.5 -7.3L25.4 -2.1L25.8 3.9L24.4 6.1L21.3 4.9L17.9 6.3L9.1 1.1L8.9 -3.3Z" fill="#232323" stroke="#18b2fa" stroke-width="1.9" stroke-linejoin="round"/><path d="M9.7 -2.2L18.1 2.5L18.1 5.3L9.8 0.7Z" fill="#3c3c3c"/><path d="M18.1 2.5L24.6 -1.4L24.6 1.3L18.1 5.3Z" fill="#505050"/><path d="M16.3 -6.3L24.6 -1.4L18.1 2.5L9.7 -2.2Z" fill="#a8a8a8"/><circle cx="22.1" cy="3.4" r="1.75" fill="#cfcfcf"/><circle cx="22.8" cy="3.9" r="0.8" fill="#18b2fa" opacity="0.5"/></g>
<text x="37.8" y="309.17" font-size="5.5" fill="#8d9197" stroke="#8d9197" stroke-width="0.22" textLength="61.17" lengthAdjust="spacingAndGlyphs" transform="rotate(0.04 37.8 309.17)">BOXER 4K30 #251 (fake)</text>
<text x="125.8" y="309.44" font-size="6" fill="#8d9197" stroke="#8d9197" stroke-width="0.22" textLength="9.6" lengthAdjust="spacingAndGlyphs" transform="rotate(0.04 125.8 309.44)">251</text>
<text x="147.46" y="309.1" font-size="5.3" fill="#8d9197" stroke="#8d9197" stroke-width="0.22" textLength="36.07" lengthAdjust="spacingAndGlyphs" transform="rotate(0.04 147.46 309.1)">255.255.255.251</text>
<text x="191.1" y="309" font-size="5" fill="#8d9197" stroke="#8d9197" stroke-width="0.22" textLength="80.7" lengthAdjust="spacingAndGlyphs" transform="rotate(0.04 191.1 309)">CRIMSON V11.8 ENGINEERING BUILD</text>
<rect x="279.3" y="303.93" width="6.8" height="6.8" fill="#14e666"/>
<rect x="281" y="305.63" width="3.4" height="3.4" fill="#11c458"/>
<text x="288.9" y="309.04" font-size="5.4" fill="#8d9197" stroke="#8d9197" stroke-width="0.22" textLength="5.6" lengthAdjust="spacingAndGlyphs" transform="rotate(0.04 288.9 309.04)">On</text>
<rect x="324.1" y="303.93" width="6.8" height="6.8" fill="#14e666"/>
<rect x="325.8" y="305.63" width="3.4" height="3.4" fill="#11c458"/>
<text x="333.8" y="309.04" font-size="5.4" fill="#8d9197" stroke="#8d9197" stroke-width="0.22" textLength="5.7" lengthAdjust="spacingAndGlyphs" transform="rotate(0.04 333.8 309.04)">Ok</text>
<rect x="375.1" y="303.93" width="6.8" height="6.8" fill="#14e666"/>
<rect x="376.8" y="305.63" width="3.4" height="3.4" fill="#11c458"/>
<text x="385" y="309.04" font-size="5.4" fill="#8d9197" stroke="#8d9197" stroke-width="0.22" textLength="10.8" lengthAdjust="spacingAndGlyphs" transform="rotate(0.04 385 309.04)">Open</text>
</g>
<g id="row-250">
<rect x="1.2" y="316.74" width="404" height="0.6" fill="#2f2f2f"/>
<g transform="translate(0 327.7)"><path d="M16.5 -7.3L25.4 -2.1L25.8 3.9L24.4 6.1L21.3 4.9L17.9 6.3L9.1 1.1L8.9 -3.3Z" fill="#232323" stroke="#18b2fa" stroke-width="1.9" stroke-linejoin="round"/><path d="M9.7 -2.2L18.1 2.5L18.1 5.3L9.8 0.7Z" fill="#3c3c3c"/><path d="M18.1 2.5L24.6 -1.4L24.6 1.3L18.1 5.3Z" fill="#505050"/><path d="M16.3 -6.3L24.6 -1.4L18.1 2.5L9.7 -2.2Z" fill="#a8a8a8"/><circle cx="22.1" cy="3.4" r="1.75" fill="#cfcfcf"/><circle cx="22.8" cy="3.9" r="0.8" fill="#18b2fa" opacity="0.5"/></g>
<text x="37.8" y="329.39" font-size="5.5" fill="#8d9197" stroke="#8d9197" stroke-width="0.22" textLength="61.17" lengthAdjust="spacingAndGlyphs" transform="rotate(0.04 37.8 329.39)">BOXER 4K30 #250 (fake)</text>
<text x="125.8" y="329.66" font-size="6" fill="#8d9197" stroke="#8d9197" stroke-width="0.22" textLength="9.6" lengthAdjust="spacingAndGlyphs" transform="rotate(0.04 125.8 329.66)">250</text>
<text x="147.46" y="329.32" font-size="5.3" fill="#8d9197" stroke="#8d9197" stroke-width="0.22" textLength="36.07" lengthAdjust="spacingAndGlyphs" transform="rotate(0.04 147.46 329.32)">255.255.255.250</text>
<text x="191.1" y="329.22" font-size="5" fill="#8d9197" stroke="#8d9197" stroke-width="0.22" textLength="80.7" lengthAdjust="spacingAndGlyphs" transform="rotate(0.04 191.1 329.22)">CRIMSON V11.8 ENGINEERING BUILD</text>
<rect x="279.3" y="324.15" width="6.8" height="6.8" fill="#14e666"/>
<rect x="281" y="325.85" width="3.4" height="3.4" fill="#11c458"/>
<text x="288.9" y="329.26" font-size="5.4" fill="#8d9197" stroke="#8d9197" stroke-width="0.22" textLength="5.6" lengthAdjust="spacingAndGlyphs" transform="rotate(0.04 288.9 329.26)">On</text>
<rect x="324.1" y="324.15" width="6.8" height="6.8" fill="#14e666"/>
<rect x="325.8" y="325.85" width="3.4" height="3.4" fill="#11c458"/>
<text x="333.8" y="329.26" font-size="5.4" fill="#8d9197" stroke="#8d9197" stroke-width="0.22" textLength="5.7" lengthAdjust="spacingAndGlyphs" transform="rotate(0.04 333.8 329.26)">Ok</text>
<rect x="375.1" y="324.15" width="6.8" height="6.8" fill="#14e666"/>
<rect x="376.8" y="325.85" width="3.4" height="3.4" fill="#11c458"/>
<text x="385" y="329.26" font-size="5.4" fill="#8d9197" stroke="#8d9197" stroke-width="0.22" textLength="10.8" lengthAdjust="spacingAndGlyphs" transform="rotate(0.04 385 329.26)">Open</text>
</g>
<g id="row-25">
<rect x="1.2" y="336.96" width="404" height="0.6" fill="#2f2f2f"/>
<g transform="translate(0 347.92)"><path d="M16.5 -7.3L25.4 -2.1L25.8 3.9L24.4 6.1L21.3 4.9L17.9 6.3L9.1 1.1L8.9 -3.3Z" fill="#232323" stroke="#0d6490" stroke-width="1.9" stroke-linejoin="round"/><path d="M9.7 -2.2L18.1 2.5L18.1 5.3L9.8 0.7Z" fill="#2c2c2c"/><path d="M18.1 2.5L24.6 -1.4L24.6 1.3L18.1 5.3Z" fill="#343434"/><path d="M16.3 -6.3L24.6 -1.4L18.1 2.5L9.7 -2.2Z" fill="#4e4e4e"/><circle cx="22.1" cy="3.4" r="1.75" fill="#5c5c5c"/><circle cx="22.8" cy="3.9" r="0.8" fill="#0d6490" opacity="0.5"/></g>
<text x="37.8" y="349.61" font-size="5.5" fill="#8d9197" stroke="#8d9197" stroke-width="0.22" textLength="58.2" lengthAdjust="spacingAndGlyphs" transform="rotate(0.04 37.8 349.61)">BOXER 4K30 #25 (fake)</text>
<text x="127.4" y="349.88" font-size="6" fill="#8d9197" stroke="#8d9197" stroke-width="0.22" textLength="6.4" lengthAdjust="spacingAndGlyphs" transform="rotate(0.04 127.4 349.88)">25</text>
<text x="148.8" y="349.54" font-size="5.3" fill="#8d9197" stroke="#8d9197" stroke-width="0.22" textLength="33.4" lengthAdjust="spacingAndGlyphs" transform="rotate(0.04 148.8 349.54)">255.255.255.25</text>
<circle cx="194.4" cy="347.72" r="4.1" fill="#1d1a20"/>
<circle cx="194.4" cy="347.72" r="3.4" fill="#84dc36"/>
<path transform="translate(192.3 345.57) scale(0.35)" d="M2.600 6.400l2.300 2.300 4.500-5.200" stroke="#eefbe0" stroke-width="1.9" fill="none"/>
<text x="201" y="349.51" font-size="5.2" fill="#8d9197" stroke="#8d9197" stroke-width="0.22" textLength="69.9" lengthAdjust="spacingAndGlyphs" transform="rotate(0.04 201 349.51)">boxer.n2019-10-08.SUPER LIGHT</text>
<rect x="279.3" y="344.37" width="6.8" height="6.8" fill="#1074a8"/>
<rect x="281" y="346.07" width="3.4" height="3.4" fill="#0d6392"/>
<text x="288.6" y="349.48" font-size="5.4" fill="#8d9197" stroke="#8d9197" stroke-width="0.22" textLength="17.4" lengthAdjust="spacingAndGlyphs" transform="rotate(0.04 288.6 349.48)">Standby</text>
<rect x="324.1" y="344.37" width="6.8" height="6.8" fill="#14e666"/>
<rect x="325.8" y="346.07" width="3.4" height="3.4" fill="#11c458"/>
<text x="333.8" y="349.48" font-size="5.4" fill="#8d9197" stroke="#8d9197" stroke-width="0.22" textLength="5.7" lengthAdjust="spacingAndGlyphs" transform="rotate(0.04 333.8 349.48)">Ok</text>
<rect x="375.1" y="344.37" width="6.8" height="6.8" fill="#9a18d8"/>
<rect x="376.8" y="346.07" width="3.4" height="3.4" fill="#8414bc"/>
<text x="385" y="349.48" font-size="5.4" fill="#8d9197" stroke="#8d9197" stroke-width="0.22" textLength="13.9" lengthAdjust="spacingAndGlyphs" transform="rotate(0.04 385 349.48)">Closed</text>
</g>
<g id="row-249">
<rect x="1.2" y="357.18" width="404" height="0.6" fill="#2f2f2f"/>
<g transform="translate(0 368.14)"><path d="M16.5 -7.3L25.4 -2.1L25.8 3.9L24.4 6.1L21.3 4.9L17.9 6.3L9.1 1.1L8.9 -3.3Z" fill="#232323" stroke="#18b2fa" stroke-width="1.9" stroke-linejoin="round"/><path d="M9.7 -2.2L18.1 2.5L18.1 5.3L9.8 0.7Z" fill="#3c3c3c"/><path d="M18.1 2.5L24.6 -1.4L24.6 1.3L18.1 5.3Z" fill="#505050"/><path d="M16.3 -6.3L24.6 -1.4L18.1 2.5L9.7 -2.2Z" fill="#a8a8a8"/><circle cx="22.1" cy="3.4" r="1.75" fill="#cfcfcf"/><circle cx="22.8" cy="3.9" r="0.8" fill="#18b2fa" opacity="0.5"/></g>
<text x="37.8" y="369.83" font-size="5.5" fill="#8d9197" stroke="#8d9197" stroke-width="0.22" textLength="61.17" lengthAdjust="spacingAndGlyphs" transform="rotate(0.04 37.8 369.83)">BOXER 4K30 #249 (fake)</text>
<text x="125.8" y="370.1" font-size="6" fill="#8d9197" stroke="#8d9197" stroke-width="0.22" textLength="9.6" lengthAdjust="spacingAndGlyphs" transform="rotate(0.04 125.8 370.1)">249</text>
<text x="147.46" y="369.76" font-size="5.3" fill="#8d9197" stroke="#8d9197" stroke-width="0.22" textLength="36.07" lengthAdjust="spacingAndGlyphs" transform="rotate(0.04 147.46 369.76)">255.255.255.249</text>
<text x="191.1" y="369.66" font-size="5" fill="#8d9197" stroke="#8d9197" stroke-width="0.22" textLength="80.7" lengthAdjust="spacingAndGlyphs" transform="rotate(0.04 191.1 369.66)">CRIMSON V11.6 ENGINEERING BUILD</text>
<rect x="279.3" y="364.59" width="6.8" height="6.8" fill="#14e666"/>
<rect x="281" y="366.29" width="3.4" height="3.4" fill="#11c458"/>
<text x="288.9" y="369.7" font-size="5.4" fill="#8d9197" stroke="#8d9197" stroke-width="0.22" textLength="5.6" lengthAdjust="spacingAndGlyphs" transform="rotate(0.04 288.9 369.7)">On</text>
<rect x="324.1" y="364.59" width="6.8" height="6.8" fill="#14e666"/>
<rect x="325.8" y="366.29" width="3.4" height="3.4" fill="#11c458"/>
<text x="333.8" y="369.7" font-size="5.4" fill="#8d9197" stroke="#8d9197" stroke-width="0.22" textLength="5.7" lengthAdjust="spacingAndGlyphs" transform="rotate(0.04 333.8 369.7)">Ok</text>
<rect x="375.1" y="364.59" width="6.8" height="6.8" fill="#14e666"/>
<rect x="376.8" y="366.29" width="3.4" height="3.4" fill="#11c458"/>
<text x="385" y="369.7" font-size="5.4" fill="#8d9197" stroke="#8d9197" stroke-width="0.22" textLength="10.8" lengthAdjust="spacingAndGlyphs" transform="rotate(0.04 385 369.7)">Open</text>
</g>
<g id="row-248">
<rect x="1.2" y="377.4" width="404" height="0.6" fill="#2f2f2f"/>
<g transform="translate(0 388.36)"><path d="M16.5 -7.3L25.4 -2.1L25.8 3.9L24.4 6.1L21.3 4.9L17.9 6.3L9.1 1.1L8.9 -3.3Z" fill="#232323" stroke="#18b2fa" stroke-width="1.9" stroke-linejoin="round"/><path d="M9.7 -2.2L18.1 2.5L18.1 5.3L9.8 0.7Z" fill="#3c3c3c"/><path d="M18.1 2.5L24.6 -1.4L24.6 1.3L18.1 5.3Z" fill="#505050"/><path d="M16.3 -6.3L24.6 -1.4L18.1 2.5L9.7 -2.2Z" fill="#a8a8a8"/><circle cx="22.1" cy="3.4" r="1.75" fill="#cfcfcf"/><circle cx="22.8" cy="3.9" r="0.8" fill="#18b2fa" opacity="0.5"/></g>
<text x="37.8" y="390.05" font-size="5.5" fill="#8d9197" stroke="#8d9197" stroke-width="0.22" textLength="61.17" lengthAdjust="spacingAndGlyphs" transform="rotate(0.04 37.8 390.05)">BOXER 4K30 #248 (fake)</text>
<text x="125.8" y="390.32" font-size="6" fill="#8d9197" stroke="#8d9197" stroke-width="0.22" textLength="9.6" lengthAdjust="spacingAndGlyphs" transform="rotate(0.04 125.8 390.32)">248</text>
<text x="147.46" y="389.98" font-size="5.3" fill="#8d9197" stroke="#8d9197" stroke-width="0.22" textLength="36.07" lengthAdjust="spacingAndGlyphs" transform="rotate(0.04 147.46 389.98)">255.255.255.248</text>
<text x="191.1" y="389.88" font-size="5" fill="#8d9197" stroke="#8d9197" stroke-width="0.22" textLength="80.7" lengthAdjust="spacingAndGlyphs" transform="rotate(0.04 191.1 389.88)">CRIMSON V11.8 ENGINEERING BUILD</text>
<rect x="279.3" y="384.81" width="6.8" height="6.8" fill="#14e666"/>
<rect x="281" y="386.51" width="3.4" height="3.4" fill="#11c458"/>
<text x="288.9" y="389.92" font-size="5.4" fill="#8d9197" stroke="#8d9197" stroke-width="0.22" textLength="5.6" lengthAdjust="spacingAndGlyphs" transform="rotate(0.04 288.9 389.92)">On</text>
<rect x="324.1" y="384.81" width="6.8" height="6.8" fill="#14e666"/>
<rect x="325.8" y="386.51" width="3.4" height="3.4" fill="#11c458"/>
<text x="333.8" y="389.92" font-size="5.4" fill="#8d9197" stroke="#8d9197" stroke-width="0.22" textLength="5.7" lengthAdjust="spacingAndGlyphs" transform="rotate(0.04 333.8 389.92)">Ok</text>
<rect x="375.1" y="384.81" width="6.8" height="6.8" fill="#14e666"/>
<rect x="376.8" y="386.51" width="3.4" height="3.4" fill="#11c458"/>
<text x="385" y="389.92" font-size="5.4" fill="#8d9197" stroke="#8d9197" stroke-width="0.22" textLength="10.8" lengthAdjust="spacingAndGlyphs" transform="rotate(0.04 385 389.92)">Open</text>
</g>
<g id="row-247">
<rect x="1.2" y="397.62" width="404" height="0.6" fill="#2f2f2f"/>
<g transform="translate(0 408.58)"><path d="M16.5 -7.3L25.4 -2.1L25.8 3.9L24.4 6.1L21.3 4.9L17.9 6.3L9.1 1.1L8.9 -3.3Z" fill="#232323" stroke="#18b2fa" stroke-width="1.9" stroke-linejoin="round"/><path d="M9.7 -2.2L18.1 2.5L18.1 5.3L9.8 0.7Z" fill="#3c3c3c"/><path d="M18.1 2.5L24.6 -1.4L24.6 1.3L18.1 5.3Z" fill="#505050"/><path d="M16.3 -6.3L24.6 -1.4L18.1 2.5L9.7 -2.2Z" fill="#a8a8a8"/><circle cx="22.1" cy="3.4" r="1.75" fill="#cfcfcf"/><circle cx="22.8" cy="3.9" r="0.8" fill="#18b2fa" opacity="0.5"/></g>
<text x="37.8" y="410.27" font-size="5.5" fill="#8d9197" stroke="#8d9197" stroke-width="0.22" textLength="61.17" lengthAdjust="spacingAndGlyphs" transform="rotate(0.04 37.8 410.27)">BOXER 4K30 #247 (fake)</text>
<text x="125.8" y="410.54" font-size="6" fill="#8d9197" stroke="#8d9197" stroke-width="0.22" textLength="9.6" lengthAdjust="spacingAndGlyphs" transform="rotate(0.04 125.8 410.54)">247</text>
<text x="147.46" y="410.2" font-size="5.3" fill="#8d9197" stroke="#8d9197" stroke-width="0.22" textLength="36.07" lengthAdjust="spacingAndGlyphs" transform="rotate(0.04 147.46 410.2)">255.255.255.247</text>
<text x="191.1" y="410.1" font-size="5" fill="#8d9197" stroke="#8d9197" stroke-width="0.22" textLength="80.7" lengthAdjust="spacingAndGlyphs" transform="rotate(0.04 191.1 410.1)">CRIMSON V11.8 ENGINEERING BUILD</text>
<rect x="279.3" y="405.03" width="6.8" height="6.8" fill="#14e666"/>
<rect x="281" y="406.73" width="3.4" height="3.4" fill="#11c458"/>
<text x="288.9" y="410.14" font-size="5.4" fill="#8d9197" stroke="#8d9197" stroke-width="0.22" textLength="5.6" lengthAdjust="spacingAndGlyphs" transform="rotate(0.04 288.9 410.14)">On</text>
<rect x="324.1" y="405.03" width="6.8" height="6.8" fill="#14e666"/>
<rect x="325.8" y="406.73" width="3.4" height="3.4" fill="#11c458"/>
<text x="333.8" y="410.14" font-size="5.4" fill="#8d9197" stroke="#8d9197" stroke-width="0.22" textLength="5.7" lengthAdjust="spacingAndGlyphs" transform="rotate(0.04 333.8 410.14)">Ok</text>
<rect x="375.1" y="405.03" width="6.8" height="6.8" fill="#14e666"/>
<rect x="376.8" y="406.73" width="3.4" height="3.4" fill="#11c458"/>
<text x="385" y="410.14" font-size="5.4" fill="#8d9197" stroke="#8d9197" stroke-width="0.22" textLength="10.8" lengthAdjust="spacingAndGlyphs" transform="rotate(0.04 385 410.14)">Open</text>
</g>
</g>
<path d="M407.600 407.500l3.700 3.800 3.700-3.800" stroke="#525252" stroke-width="0.700" fill="none"/>
<g id="upgrade-bar">
<rect x="279.8" y="401.1" width="133" height="15.4" fill="#12b2fc"/>
<text x="288.9" y="410.42" font-size="4.7" fill="#ffffff" font-weight="bold" textLength="52.1" lengthAdjust="spacingAndGlyphs" transform="rotate(0.04 288.9 410.42)">UPGRADE IN PROGRESS</text>
<rect x="346.7" y="403.9" width="57" height="9.8" fill="#0977ad" rx="0.8"/>
<text x="355.9" y="410.66" font-size="5.4" fill="#9bd2ee" font-weight="bold" textLength="38.4" lengthAdjust="spacingAndGlyphs" transform="rotate(0.04 355.9 410.66)">CANCEL UPGRADE</text>
</g>
<g id="status-panel">
<rect x="418.8" y="78" width="271.2" height="19.6" fill="#2d2d2d"/>
<rect x="418.8" y="97.5" width="271.2" height="294.1" fill="#282828"/>
<rect x="418.8" y="392" width="271.2" height="28.3" fill="#2f2f2f"/>
<text x="472.3" y="88.75" font-size="4.8" fill="#bebebe" stroke="#bebebe" stroke-width="0.22" textLength="28.5" lengthAdjust="spacingAndGlyphs" transform="rotate(0.04 472.3 88.75)">STATUS MAP</text>
<rect x="472" y="96" width="29" height="1" fill="#16a2e4"/>
<text x="605.6" y="88.75" font-size="4.8" fill="#bebebe" stroke="#bebebe" stroke-width="0.22" textLength="34.4" lengthAdjust="spacingAndGlyphs" transform="rotate(0.04 605.6 88.75)">COMMAND LOG</text>
<rect x="425.55" y="103.95" width="12.85" height="12.85" fill="#186b96"/>
<rect x="426.95" y="105.35" width="10.05" height="10.05" fill="#0e5e89"/>
<rect x="441.7" y="103.95" width="12.85" height="12.85" fill="#186b96"/>
<rect x="443.1" y="105.35" width="10.05" height="10.05" fill="#0e5e89"/>
<rect x="457.84" y="103.95" width="12.85" height="12.85" fill="#186b96"/>
<rect x="459.24" y="105.35" width="10.05" height="10.05" fill="#0e5e89"/>
<rect x="473.99" y="103.95" width="12.85" height="12.85" fill="#186b96"/>
<rect x="475.39" y="105.35" width="10.05" height="10.05" fill="#0e5e89"/>
<rect x="490.14" y="103.95" width="12.85" height="12.85" fill="#186b96"/>
<rect x="491.54" y="105.35" width="10.05" height="10.05" fill="#0e5e89"/>
<rect x="506.28" y="103.95" width="12.85" height="12.85" fill="#186b96"/>
<rect x="507.68" y="105.35" width="10.05" height="10.05" fill="#0e5e89"/>
<rect x="522.43" y="103.95" width="12.85" height="12.85" fill="#186b96"/>
<rect x="523.83" y="105.35" width="10.05" height="10.05" fill="#0e5e89"/>
<rect x="538.58" y="103.95" width="12.85" height="12.85" fill="#186b96"/>
<rect x="539.98" y="105.35" width="10.05" height="10.05" fill="#0e5e89"/>
<rect x="554.73" y="103.95" width="12.85" height="12.85" fill="#186b96"/>
<rect x="556.13" y="105.35" width="10.05" height="10.05" fill="#0e5e89"/>
<rect x="570.87" y="103.95" width="12.85" height="12.85" fill="#186b96"/>
<rect x="572.27" y="105.35" width="10.05" height="10.05" fill="#0e5e89"/>
<rect x="587.02" y="103.95" width="12.85" height="12.85" fill="#186b96"/>
<rect x="588.42" y="105.35" width="10.05" height="10.05" fill="#0e5e89"/>
<rect x="603.17" y="103.95" width="12.85" height="12.85" fill="#186b96"/>
<rect x="604.57" y="105.35" width="10.05" height="10.05" fill="#0e5e89"/>
<rect x="619.31" y="103.95" width="12.85" height="12.85" fill="#186b96"/>
<rect x="620.71" y="105.35" width="10.05" height="10.05" fill="#0e5e89"/>
<rect x="635.46" y="103.95" width="12.85" height="12.85" fill="#186b96"/>
<rect x="636.86" y="105.35" width="10.05" height="10.05" fill="#0e5e89"/>
<rect x="651.61" y="103.95" width="12.85" height="12.85" fill="#186b96"/>
<rect x="653.01" y="105.35" width="10.05" height="10.05" fill="#0e5e89"/>
<rect x="667.75" y="103.95" width="12.85" height="12.85" fill="#186b96"/>
<rect x="669.15" y="105.35" width="10.05" height="10.05" fill="#0e5e89"/>
<rect x="425.55" y="120.1" width="12.85" height="12.85" fill="#186b96"/>
<rect x="426.95" y="121.5" width="10.05" height="10.05" fill="#0e5e89"/>
<rect x="441.7" y="120.1" width="12.85" height="12.85" fill="#186b96"/>
<rect x="443.1" y="121.5" width="10.05" height="10.05" fill="#0e5e89"/>
<rect x="457.84" y="120.1" width="12.85" height="12.85" fill="#186b96"/>
<rect x="459.24" y="121.5" width="10.05" height="10.05" fill="#0e5e89"/>
<rect x="473.99" y="120.1" width="12.85" height="12.85" fill="#186b96"/>
<rect x="475.39" y="121.5" width="10.05" height="10.05" fill="#0e5e89"/>
<rect x="490.14" y="120.1" width="12.85" height="12.85" fill="#186b96"/>
<rect x="491.54" y="121.5" width="10.05" height="10.05" fill="#0e5e89"/>
<rect x="506.28" y="120.1" width="12.85" height="12.85" fill="#186b96"/>
<rect x="507.68" y="121.5" width="10.05" height="10.05" fill="#0e5e89"/>
<rect x="522.43" y="120.1" width="12.85" height="12.85" fill="#186b96"/>
<rect x="523.83" y="121.5" width="10.05" height="10.05" fill="#0e5e89"/>
<rect x="538.58" y="120.1" width="12.85" height="12.85" fill="#186b96"/>
<rect x="539.98" y="121.5" width="10.05" height="10.05" fill="#0e5e89"/>
<rect x="554.73" y="120.1" width="12.85" height="12.85" fill="#186b96"/>
<rect x="556.13" y="121.5" width="10.05" height="10.05" fill="#0e5e89"/>
<rect x="570.87" y="120.1" width="12.85" height="12.85" fill="#186b96"/>
<rect x="572.27" y="121.5" width="10.05" height="10.05" fill="#0e5e89"/>
<rect x="587.02" y="120.1" width="12.85" height="12.85" fill="#186b96"/>
<rect x="588.42" y="121.5" width="10.05" height="10.05" fill="#0e5e89"/>
<rect x="603.17" y="120.1" width="12.85" height="12.85" fill="#186b96"/>
<rect x="604.57" y="121.5" width="10.05" height="10.05" fill="#0e5e89"/>
<rect x="619.31" y="120.1" width="12.85" height="12.85" fill="#186b96"/>
<rect x="620.71" y="121.5" width="10.05" height="10.05" fill="#0e5e89"/>
<rect x="635.46" y="120.1" width="12.85" height="12.85" fill="#186b96"/>
<rect x="636.86" y="121.5" width="10.05" height="10.05" fill="#0e5e89"/>
<rect x="651.61" y="120.1" width="12.85" height="12.85" fill="#186b96"/>
<rect x="653.01" y="121.5" width="10.05" height="10.05" fill="#0e5e89"/>
<rect x="667.75" y="120.1" width="12.85" height="12.85" fill="#186b96"/>
<rect x="669.15" y="121.5" width="10.05" height="10.05" fill="#0e5e89"/>
<rect x="425.55" y="136.24" width="12.85" height="12.85" fill="#186b96"/>
<rect x="426.95" y="137.64" width="10.05" height="10.05" fill="#0e5e89"/>
<rect x="441.7" y="136.24" width="12.85" height="12.85" fill="#186b96"/>
<rect x="443.1" y="137.64" width="10.05" height="10.05" fill="#0e5e89"/>
<rect x="457.84" y="136.24" width="12.85" height="12.85" fill="#186b96"/>
<rect x="459.24" y="137.64" width="10.05" height="10.05" fill="#0e5e89"/>
<rect x="473.99" y="136.24" width="12.85" height="12.85" fill="#186b96"/>
<rect x="475.39" y="137.64" width="10.05" height="10.05" fill="#0e5e89"/>
<rect x="490.14" y="136.24" width="12.85" height="12.85" fill="#186b96"/>
<rect x="491.54" y="137.64" width="10.05" height="10.05" fill="#0e5e89"/>
<rect x="506.28" y="136.24" width="12.85" height="12.85" fill="#186b96"/>
<rect x="507.68" y="137.64" width="10.05" height="10.05" fill="#0e5e89"/>
<rect x="522.43" y="136.24" width="12.85" height="12.85" fill="#186b96"/>
<rect x="523.83" y="137.64" width="10.05" height="10.05" fill="#0e5e89"/>
<rect x="538.58" y="136.24" width="12.85" height="12.85" fill="#186b96"/>
<rect x="539.98" y="137.64" width="10.05" height="10.05" fill="#0e5e89"/>
<rect x="554.73" y="136.24" width="12.85" height="12.85" fill="#186b96"/>
<rect x="556.13" y="137.64" width="10.05" height="10.05" fill="#0e5e89"/>
<rect x="570.87" y="136.24" width="12.85" height="12.85" fill="#186b96"/>
<rect x="572.27" y="137.64" width="10.05" height="10.05" fill="#0e5e89"/>
<rect x="587.02" y="136.24" width="12.85" height="12.85" fill="#186b96"/>
<rect x="588.42" y="137.64" width="10.05" height="10.05" fill="#0e5e89"/>
<rect x="603.17" y="136.24" width="12.85" height="12.85" fill="#186b96"/>
<rect x="604.57" y="137.64" width="10.05" height="10.05" fill="#0e5e89"/>
<rect x="619.31" y="136.24" width="12.85" height="12.85" fill="#186b96"/>
<rect x="620.71" y="137.64" width="10.05" height="10.05" fill="#0e5e89"/>
<rect x="635.46" y="136.24" width="12.85" height="12.85" fill="#186b96"/>
<rect x="636.86" y="137.64" width="10.05" height="10.05" fill="#0e5e89"/>
<rect x="651.61" y="136.24" width="12.85" height="12.85" fill="#186b96"/>
<rect x="653.01" y="137.64" width="10.05" height="10.05" fill="#0e5e89"/>
<rect x="667.75" y="136.24" width="12.85" height="12.85" fill="#186b96"/>
<rect x="669.15" y="137.64" width="10.05" height="10.05" fill="#0e5e89"/>
<rect x="425.55" y="152.39" width="12.85" height="12.85" fill="#186b96"/>
<rect x="426.95" y="153.79" width="10.05" height="10.05" fill="#0e5e89"/>
<rect x="441.7" y="152.39" width="12.85" height="12.85" fill="#186b96"/>
<rect x="443.1" y="153.79" width="10.05" height="10.05" fill="#0e5e89"/>
<rect x="457.84" y="152.39" width="12.85" height="12.85" fill="#186b96"/>
<rect x="459.24" y="153.79" width="10.05" height="10.05" fill="#0e5e89"/>
<rect x="473.99" y="152.39" width="12.85" height="12.85" fill="#186b96"/>
<rect x="475.39" y="153.79" width="10.05" height="10.05" fill="#0e5e89"/>
<rect x="490.14" y="152.39" width="12.85" height="12.85" fill="#186b96"/>
<rect x="491.54" y="153.79" width="10.05" height="10.05" fill="#0e5e89"/>
<rect x="506.28" y="152.39" width="12.85" height="12.85" fill="#186b96"/>
<rect x="507.68" y="153.79" width="10.05" height="10.05" fill="#0e5e89"/>
<rect x="522.43" y="152.39" width="12.85" height="12.85" fill="#186b96"/>
<rect x="523.83" y="153.79" width="10.05" height="10.05" fill="#0e5e89"/>
<rect x="538.58" y="152.39" width="12.85" height="12.85" fill="#186b96"/>
<rect x="539.98" y="153.79" width="10.05" height="10.05" fill="#0e5e89"/>
<rect x="554.73" y="152.39" width="12.85" height="12.85" fill="#186b96"/>
<rect x="556.13" y="153.79" width="10.05" height="10.05" fill="#0e5e89"/>
<rect x="570.87" y="152.39" width="12.85" height="12.85" fill="#186b96"/>
<rect x="572.27" y="153.79" width="10.05" height="10.05" fill="#0e5e89"/>
<rect x="587.02" y="152.39" width="12.85" height="12.85" fill="#186b96"/>
<rect x="588.42" y="153.79" width="10.05" height="10.05" fill="#0e5e89"/>
<rect x="603.17" y="152.39" width="12.85" height="12.85" fill="#186b96"/>
<rect x="604.57" y="153.79" width="10.05" height="10.05" fill="#0e5e89"/>
<rect x="619.31" y="152.39" width="12.85" height="12.85" fill="#186b96"/>
<rect x="620.71" y="153.79" width="10.05" height="10.05" fill="#0e5e89"/>
<rect x="635.46" y="152.39" width="12.85" height="12.85" fill="#186b96"/>
<rect x="636.86" y="153.79" width="10.05" height="10.05" fill="#0e5e89"/>
<rect x="651.61" y="152.39" width="12.85" height="12.85" fill="#186b96"/>
<rect x="653.01" y="153.79" width="10.05" height="10.05" fill="#0e5e89"/>
<rect x="667.75" y="152.39" width="12.85" height="12.85" fill="#186b96"/>
<rect x="669.15" y="153.79" width="10.05" height="10.05" fill="#0e5e89"/>
<rect x="425.55" y="168.54" width="12.85" height="12.85" fill="#186b96"/>
<rect x="426.95" y="169.94" width="10.05" height="10.05" fill="#0e5e89"/>
<rect x="441.7" y="168.54" width="12.85" height="12.85" fill="#186b96"/>
<rect x="443.1" y="169.94" width="10.05" height="10.05" fill="#0e5e89"/>
<rect x="457.84" y="168.54" width="12.85" height="12.85" fill="#186b96"/>
<rect x="459.24" y="169.94" width="10.05" height="10.05" fill="#0e5e89"/>
<rect x="473.99" y="168.54" width="12.85" height="12.85" fill="#186b96"/>
<rect x="475.39" y="169.94" width="10.05" height="10.05" fill="#0e5e89"/>
<rect x="490.14" y="168.54" width="12.85" height="12.85" fill="#186b96"/>
<rect x="491.54" y="169.94" width="10.05" height="10.05" fill="#0e5e89"/>
<rect x="506.28" y="168.54" width="12.85" height="12.85" fill="#186b96"/>
<rect x="507.68" y="169.94" width="10.05" height="10.05" fill="#0e5e89"/>
<rect x="522.43" y="168.54" width="12.85" height="12.85" fill="#186b96"/>
<rect x="523.83" y="169.94" width="10.05" height="10.05" fill="#0e5e89"/>
<rect x="538.58" y="168.54" width="12.85" height="12.85" fill="#186b96"/>
<rect x="539.98" y="169.94" width="10.05" height="10.05" fill="#0e5e89"/>
<rect x="554.73" y="168.54" width="12.85" height="12.85" fill="#186b96"/>
<rect x="556.13" y="169.94" width="10.05" height="10.05" fill="#0e5e89"/>
<rect x="570.87" y="168.54" width="12.85" height="12.85" fill="#186b96"/>
<rect x="572.27" y="169.94" width="10.05" height="10.05" fill="#0e5e89"/>
<rect x="587.02" y="168.54" width="12.85" height="12.85" fill="#186b96"/>
<rect x="588.42" y="169.94" width="10.05" height="10.05" fill="#0e5e89"/>
<rect x="603.17" y="168.54" width="12.85" height="12.85" fill="#186b96"/>
<rect x="604.57" y="169.94" width="10.05" height="10.05" fill="#0e5e89"/>
<rect x="619.31" y="168.54" width="12.85" height="12.85" fill="#186b96"/>
<rect x="620.71" y="169.94" width="10.05" height="10.05" fill="#0e5e89"/>
<rect x="635.46" y="168.54" width="12.85" height="12.85" fill="#186b96"/>
<rect x="636.86" y="169.94" width="10.05" height="10.05" fill="#0e5e89"/>
<rect x="651.61" y="168.54" width="12.85" height="12.85" fill="#186b96"/>
<rect x="653.01" y="169.94" width="10.05" height="10.05" fill="#0e5e89"/>
<rect x="667.75" y="168.54" width="12.85" height="12.85" fill="#186b96"/>
<rect x="669.15" y="169.94" width="10.05" height="10.05" fill="#0e5e89"/>
<rect x="425.55" y="184.69" width="12.85" height="12.85" fill="#186b96"/>
<rect x="426.95" y="186.09" width="10.05" height="10.05" fill="#0e5e89"/>
<rect x="441.7" y="184.69" width="12.85" height="12.85" fill="#186b96"/>
<rect x="443.1" y="186.09" width="10.05" height="10.05" fill="#0e5e89"/>
<rect x="457.84" y="184.69" width="12.85" height="12.85" fill="#186b96"/>
<rect x="459.24" y="186.09" width="10.05" height="10.05" fill="#0e5e89"/>
<rect x="473.99" y="184.69" width="12.85" height="12.85" fill="#186b96"/>
<rect x="475.39" y="186.09" width="10.05" height="10.05" fill="#0e5e89"/>
<rect x="490.14" y="184.69" width="12.85" height="12.85" fill="#186b96"/>
<rect x="491.54" y="186.09" width="10.05" height="10.05" fill="#0e5e89"/>
<rect x="506.28" y="184.69" width="12.85" height="12.85" fill="#186b96"/>
<rect x="507.68" y="186.09" width="10.05" height="10.05" fill="#0e5e89"/>
<rect x="522.43" y="184.69" width="12.85" height="12.85" fill="#186b96"/>
<rect x="523.83" y="186.09" width="10.05" height="10.05" fill="#0e5e89"/>
<rect x="538.58" y="184.69" width="12.85" height="12.85" fill="#186b96"/>
<rect x="539.98" y="186.09" width="10.05" height="10.05" fill="#0e5e89"/>
<rect x="554.73" y="184.69" width="12.85" height="12.85" fill="#186b96"/>
<rect x="556.13" y="186.09" width="10.05" height="10.05" fill="#0e5e89"/>
<rect x="570.87" y="184.69" width="12.85" height="12.85" fill="#186b96"/>
<rect x="572.27" y="186.09" width="10.05" height="10.05" fill="#0e5e89"/>
<rect x="587.02" y="184.69" width="12.85" height="12.85" fill="#186b96"/>
<rect x="588.42" y="186.09" width="10.05" height="10.05" fill="#0e5e89"/>
<rect x="603.17" y="184.69" width="12.85" height="12.85" fill="#186b96"/>
<rect x="604.57" y="186.09" width="10.05" height="10.05" fill="#0e5e89"/>
<rect x="619.31" y="184.69" width="12.85" height="12.85" fill="#186b96"/>
<rect x="620.71" y="186.09" width="10.05" height="10.05" fill="#0e5e89"/>
<rect x="635.46" y="184.69" width="12.85" height="12.85" fill="#186b96"/>
<rect x="636.86" y="186.09" width="10.05" height="10.05" fill="#0e5e89"/>
<rect x="651.61" y="184.69" width="12.85" height="12.85" fill="#186b96"/>
<rect x="653.01" y="186.09" width="10.05" height="10.05" fill="#0e5e89"/>
<rect x="667.75" y="184.69" width="12.85" height="12.85" fill="#186b96"/>
<rect x="669.15" y="186.09" width="10.05" height="10.05" fill="#0e5e89"/>
<rect x="425.55" y="200.83" width="12.85" height="12.85" fill="#186b96"/>
<rect x="426.95" y="202.23" width="10.05" height="10.05" fill="#0e5e89"/>
<rect x="441.7" y="200.83" width="12.85" height="12.85" fill="#186b96"/>
<rect x="443.1" y="202.23" width="10.05" height="10.05" fill="#0e5e89"/>
<rect x="457.84" y="200.83" width="12.85" height="12.85" fill="#186b96"/>
<rect x="459.24" y="202.23" width="10.05" height="10.05" fill="#0e5e89"/>
<rect x="473.99" y="200.83" width="12.85" height="12.85" fill="#186b96"/>
<rect x="475.39" y="202.23" width="10.05" height="10.05" fill="#0e5e89"/>
<rect x="490.14" y="200.83" width="12.85" height="12.85" fill="#1b668f"/>
<rect x="491.64" y="202.33" width="9.85" height="9.85" fill="#d0103a"/>
<rect x="506.28" y="200.83" width="12.85" height="12.85" fill="#186b96"/>
<rect x="507.68" y="202.23" width="10.05" height="10.05" fill="#0e5e89"/>
<rect x="522.43" y="200.83" width="12.85" height="12.85" fill="#186b96"/>
<rect x="523.83" y="202.23" width="10.05" height="10.05" fill="#0e5e89"/>
<rect x="538.58" y="200.83" width="12.85" height="12.85" fill="#186b96"/>
<rect x="539.98" y="202.23" width="10.05" height="10.05" fill="#0e5e89"/>
<rect x="554.73" y="200.83" width="12.85" height="12.85" fill="#186b96"/>
<rect x="556.13" y="202.23" width="10.05" height="10.05" fill="#0e5e89"/>
<rect x="570.87" y="200.83" width="12.85" height="12.85" fill="#186b96"/>
<rect x="572.27" y="202.23" width="10.05" height="10.05" fill="#0e5e89"/>
<rect x="587.02" y="200.83" width="12.85" height="12.85" fill="#186b96"/>
<rect x="588.42" y="202.23" width="10.05" height="10.05" fill="#0e5e89"/>
<rect x="603.17" y="200.83" width="12.85" height="12.85" fill="#186b96"/>
<rect x="604.57" y="202.23" width="10.05" height="10.05" fill="#0e5e89"/>
<rect x="619.31" y="200.83" width="12.85" height="12.85" fill="#186b96"/>
<rect x="620.71" y="202.23" width="10.05" height="10.05" fill="#0e5e89"/>
<rect x="635.46" y="200.83" width="12.85" height="12.85" fill="#186b96"/>
<rect x="636.86" y="202.23" width="10.05" height="10.05" fill="#0e5e89"/>
<rect x="651.61" y="200.83" width="12.85" height="12.85" fill="#186b96"/>
<rect x="653.01" y="202.23" width="10.05" height="10.05" fill="#0e5e89"/>
<rect x="667.75" y="200.83" width="12.85" height="12.85" fill="#186b96"/>
<rect x="669.15" y="202.23" width="10.05" height="10.05" fill="#0e5e89"/>
<rect x="425.55" y="216.98" width="12.85" height="12.85" fill="#186b96"/>
<rect x="426.95" y="218.38" width="10.05" height="10.05" fill="#0e5e89"/>
<rect x="441.7" y="216.98" width="12.85" height="12.85" fill="#186b96"/>
<rect x="443.1" y="218.38" width="10.05" height="10.05" fill="#0e5e89"/>
<rect x="457.84" y="216.98" width="12.85" height="12.85" fill="#186b96"/>
<rect x="459.24" y="218.38" width="10.05" height="10.05" fill="#0e5e89"/>
<rect x="473.99" y="216.98" width="12.85" height="12.85" fill="#186b96"/>
<rect x="475.39" y="218.38" width="10.05" height="10.05" fill="#0e5e89"/>
<rect x="490.14" y="216.98" width="12.85" height="12.85" fill="#186b96"/>
<rect x="491.54" y="218.38" width="10.05" height="10.05" fill="#0e5e89"/>
<rect x="506.28" y="216.98" width="12.85" height="12.85" fill="#186b96"/>
<rect x="507.68" y="218.38" width="10.05" height="10.05" fill="#0e5e89"/>
<rect x="522.43" y="216.98" width="12.85" height="12.85" fill="#186b96"/>
<rect x="523.83" y="218.38" width="10.05" height="10.05" fill="#0e5e89"/>
<rect x="538.58" y="216.98" width="12.85" height="12.85" fill="#186b96"/>
<rect x="539.98" y="218.38" width="10.05" height="10.05" fill="#0e5e89"/>
<rect x="554.73" y="216.98" width="12.85" height="12.85" fill="#1b668f"/>
<rect x="556.23" y="218.48" width="9.85" height="9.85" fill="#9c8a3e"/>
<rect x="570.87" y="216.98" width="12.85" height="12.85" fill="#1b668f"/>
<rect x="572.37" y="218.48" width="9.85" height="9.85" fill="#9c8a3e"/>
<rect x="587.02" y="216.98" width="12.85" height="12.85" fill="#1b668f"/>
<rect x="588.52" y="218.48" width="9.85" height="9.85" fill="#9c8a3e"/>
<rect x="603.17" y="216.98" width="12.85" height="12.85" fill="#1b668f"/>
<rect x="604.67" y="218.48" width="9.85" height="9.85" fill="#9c8a3e"/>
<rect x="619.31" y="216.98" width="12.85" height="12.85" fill="#1b668f"/>
<rect x="620.81" y="218.48" width="9.85" height="9.85" fill="#9c8a3e"/>
<rect x="635.46" y="216.98" width="12.85" height="12.85" fill="#1b668f"/>
<rect x="636.96" y="218.48" width="9.85" height="9.85" fill="#9c8a3e"/>
<rect x="651.61" y="216.98" width="12.85" height="12.85" fill="#1b668f"/>
<rect x="653.11" y="218.48" width="9.85" height="9.85" fill="#9c8a3e"/>
<rect x="667.75" y="216.98" width="12.85" height="12.85" fill="#1b668f"/>
<rect x="669.25" y="218.48" width="9.85" height="9.85" fill="#9c8a3e"/>
<rect x="425.55" y="233.13" width="12.85" height="12.85" fill="#1b668f"/>
<rect x="427.05" y="234.63" width="9.85" height="9.85" fill="#9c8a3e"/>
<rect x="441.7" y="233.13" width="12.85" height="12.85" fill="#1b668f"/>
<rect x="443.2" y="234.63" width="9.85" height="9.85" fill="#9c8a3e"/>
<rect x="457.84" y="233.13" width="12.85" height="12.85" fill="#1b668f"/>
<rect x="459.34" y="234.63" width="9.85" height="9.85" fill="#dcc050"/>
<rect x="473.99" y="233.13" width="12.85" height="12.85" fill="#1b668f"/>
<rect x="475.49" y="234.63" width="9.85" height="9.85" fill="#dcc050"/>
<rect x="490.14" y="233.13" width="12.85" height="12.85" fill="#1b668f"/>
<rect x="491.64" y="234.63" width="9.85" height="9.85" fill="#dcc050"/>
<rect x="506.28" y="233.13" width="12.85" height="12.85" fill="#1b668f"/>
<rect x="507.78" y="234.63" width="9.85" height="9.85" fill="#12cb5a"/>
<circle cx="512.91" cy="241.35" r="1.45" fill="#e43a62"/>
<circle cx="512.91" cy="241.25" r="0.6" fill="#f6b0c0"/>
<rect x="522.43" y="233.13" width="12.85" height="12.85" fill="#1b668f"/>
<rect x="523.93" y="234.63" width="9.85" height="9.85" fill="#12cb5a"/>
<circle cx="529.06" cy="241.35" r="1.45" fill="#e43a62"/>
<circle cx="529.06" cy="241.25" r="0.6" fill="#f6b0c0"/>
<rect x="538.58" y="233.13" width="12.85" height="12.85" fill="#1b668f"/>
<rect x="540.08" y="234.63" width="9.85" height="9.85" fill="#dcc050"/>
<rect x="554.73" y="233.13" width="12.85" height="12.85" fill="#1b668f"/>
<rect x="556.23" y="234.63" width="9.85" height="9.85" fill="#dcc050"/>
<rect x="570.87" y="233.13" width="12.85" height="12.85" fill="#1b668f"/>
<rect x="572.37" y="234.63" width="9.85" height="9.85" fill="#dcc050"/>
<rect x="587.02" y="233.13" width="12.85" height="12.85" fill="#1b668f"/>
<rect x="588.52" y="234.63" width="9.85" height="9.85" fill="#dcc050"/>
<rect x="603.17" y="233.13" width="12.85" height="12.85" fill="#1b668f"/>
<rect x="604.67" y="234.63" width="9.85" height="9.85" fill="#dcc050"/>
<rect x="619.31" y="233.13" width="12.85" height="12.85" fill="#1b668f"/>
<rect x="620.81" y="234.63" width="9.85" height="9.85" fill="#12cb5a"/>
<rect x="635.46" y="233.13" width="12.85" height="12.85" fill="#1b668f"/>
<rect x="636.96" y="234.63" width="9.85" height="9.85" fill="#0a8a3c"/>
<clipPath id="c1"><rect x="636.96" y="234.63" width="9.85" height="9.85"/></clipPath>
<g clip-path="url(#c1)"><path d="M641.89 239.55L641.89 226.7A12.85 12.85 0 0 1 653.83 244.28Z" fill="#12e266"/></g>
<rect x="636.96" y="240.08" width="9.85" height="4.4" fill="url(#bandg)"/>
<text x="638.49" y="242.94" font-size="4.1" fill="#b6d2b8" font-weight="bold" textLength="7" lengthAdjust="spacingAndGlyphs" transform="rotate(0.04 638.49 242.94)">31%</text>
<rect x="651.61" y="233.13" width="12.85" height="12.85" fill="#1b668f"/>
<rect x="653.11" y="234.63" width="9.85" height="9.85" fill="#0a8a3c"/>
<clipPath id="c2"><rect x="653.11" y="234.63" width="9.85" height="9.85"/></clipPath>
<g clip-path="url(#c2)"><path d="M658.03 239.55L658.03 226.7A12.85 12.85 0 0 1 669.98 244.28Z" fill="#12e266"/></g>
<rect x="653.11" y="240.08" width="9.85" height="4.4" fill="url(#bandg)"/>
<text x="654.63" y="242.94" font-size="4.1" fill="#b6d2b8" font-weight="bold" textLength="7" lengthAdjust="spacingAndGlyphs" transform="rotate(0.04 654.63 242.94)">31%</text>
<rect x="667.75" y="233.13" width="12.85" height="12.85" fill="#1b668f"/>
<rect x="669.25" y="234.63" width="9.85" height="9.85" fill="#0a8a3c"/>
<clipPath id="c3"><rect x="669.25" y="234.63" width="9.85" height="9.85"/></clipPath>
<g clip-path="url(#c3)"><path d="M674.18 239.55L674.18 226.7A12.85 12.85 0 0 1 686.13 244.28Z" fill="#12e266"/></g>
<rect x="669.25" y="240.08" width="9.85" height="4.4" fill="url(#bandg)"/>
<text x="670.78" y="242.94" font-size="4.1" fill="#b6d2b8" font-weight="bold" textLength="7" lengthAdjust="spacingAndGlyphs" transform="rotate(0.04 670.78 242.94)">31%</text>
<rect x="425.55" y="249.27" width="12.85" height="12.85" fill="#1b668f"/>
<rect x="427.05" y="250.77" width="9.85" height="9.85" fill="#0a8a3c"/>
<clipPath id="c4"><rect x="427.05" y="250.77" width="9.85" height="9.85"/></clipPath>
<g clip-path="url(#c4)"><path d="M431.98 255.7L431.98 242.85A12.85 12.85 0 0 1 443.92 260.43Z" fill="#12e266"/></g>
<rect x="427.05" y="256.22" width="9.85" height="4.4" fill="url(#bandg)"/>
<text x="428.58" y="259.08" font-size="4.1" fill="#b6d2b8" font-weight="bold" textLength="7" lengthAdjust="spacingAndGlyphs" transform="rotate(0.04 428.58 259.08)">31%</text>
<rect x="441.7" y="249.27" width="12.85" height="12.85" fill="#1b668f"/>
<rect x="443.2" y="250.77" width="9.85" height="9.85" fill="#0a8a3c"/>
<clipPath id="c5"><rect x="443.2" y="250.77" width="9.85" height="9.85"/></clipPath>
<g clip-path="url(#c5)"><path d="M448.12 255.7L448.12 242.85A12.85 12.85 0 0 1 460.07 260.43Z" fill="#12e266"/></g>
<rect x="443.2" y="256.22" width="9.85" height="4.4" fill="url(#bandg)"/>
<text x="444.72" y="259.08" font-size="4.1" fill="#b6d2b8" font-weight="bold" textLength="7" lengthAdjust="spacingAndGlyphs" transform="rotate(0.04 444.72 259.08)">31%</text>
<rect x="457.84" y="249.27" width="12.85" height="12.85" fill="#1b668f"/>
<rect x="459.34" y="250.77" width="9.85" height="9.85" fill="#0a8a3c"/>
<clipPath id="c6"><rect x="459.34" y="250.77" width="9.85" height="9.85"/></clipPath>
<g clip-path="url(#c6)"><path d="M464.27 255.7L464.27 242.85A12.85 12.85 0 0 1 476.22 260.43Z" fill="#12e266"/></g>
<rect x="459.34" y="256.22" width="9.85" height="4.4" fill="url(#bandg)"/>
<text x="460.87" y="259.08" font-size="4.1" fill="#b6d2b8" font-weight="bold" textLength="7" lengthAdjust="spacingAndGlyphs" transform="rotate(0.04 460.87 259.08)">31%</text>
<rect x="473.99" y="249.27" width="12.85" height="12.85" fill="#1b668f"/>
<rect x="475.49" y="250.77" width="9.85" height="9.85" fill="#0a8a3c"/>
<clipPath id="c7"><rect x="475.49" y="250.77" width="9.85" height="9.85"/></clipPath>
<g clip-path="url(#c7)"><path d="M480.42 255.7L480.42 242.85A12.85 12.85 0 0 1 492.36 260.43Z" fill="#12e266"/></g>
<rect x="475.49" y="256.22" width="9.85" height="4.4" fill="url(#bandg)"/>
<text x="477.02" y="259.08" font-size="4.1" fill="#b6d2b8" font-weight="bold" textLength="7" lengthAdjust="spacingAndGlyphs" transform="rotate(0.04 477.02 259.08)">31%</text>
<rect x="490.14" y="249.27" width="12.85" height="12.85" fill="#1b668f"/>
<rect x="491.64" y="250.77" width="9.85" height="9.85" fill="#0a8a3c"/>
<clipPath id="c8"><rect x="491.64" y="250.77" width="9.85" height="9.85"/></clipPath>
<g clip-path="url(#c8)"><path d="M496.56 255.7L496.56 242.85A12.85 12.85 0 0 1 508.51 260.43Z" fill="#12e266"/></g>
<rect x="491.64" y="256.22" width="9.85" height="4.4" fill="url(#bandg)"/>
<text x="493.16" y="259.08" font-size="4.1" fill="#b6d2b8" font-weight="bold" textLength="7" lengthAdjust="spacingAndGlyphs" transform="rotate(0.04 493.16 259.08)">31%</text>
<rect x="506.28" y="249.27" width="12.85" height="12.85" fill="#1b668f"/>
<rect x="507.78" y="250.77" width="9.85" height="9.85" fill="#0a8a3c"/>
<clipPath id="c9"><rect x="507.78" y="250.77" width="9.85" height="9.85"/></clipPath>
<g clip-path="url(#c9)"><path d="M512.71 255.7L512.71 242.85A12.85 12.85 0 0 1 524.66 260.43Z" fill="#12e266"/></g>
<rect x="507.78" y="256.22" width="9.85" height="4.4" fill="url(#bandg)"/>
<text x="509.31" y="259.08" font-size="4.1" fill="#b6d2b8" font-weight="bold" textLength="7" lengthAdjust="spacingAndGlyphs" transform="rotate(0.04 509.31 259.08)">31%</text>
<rect x="522.43" y="249.27" width="12.85" height="12.85" fill="#1b668f"/>
<rect x="523.93" y="250.77" width="9.85" height="9.85" fill="#8a0a24"/>
<clipPath id="c10"><rect x="523.93" y="250.77" width="9.85" height="9.85"/></clipPath>
<g clip-path="url(#c10)"><path d="M528.86 255.7L528.86 242.85A12.85 12.85 0 0 1 541.08 259.67Z" fill="#ec1236"/></g>
<rect x="523.93" y="256.22" width="9.85" height="4.4" fill="url(#bandr)"/>
<text x="525.46" y="259.08" font-size="4.1" fill="#b6d2b8" font-weight="bold" textLength="7" lengthAdjust="spacingAndGlyphs" transform="rotate(0.04 525.46 259.08)">30%</text>
<rect x="538.58" y="249.27" width="12.85" height="12.85" fill="#1b668f"/>
<rect x="540.08" y="250.77" width="9.85" height="9.85" fill="#0a8a3c"/>
<clipPath id="c11"><rect x="540.08" y="250.77" width="9.85" height="9.85"/></clipPath>
<g clip-path="url(#c11)"><path d="M545 255.7L545 242.85A12.85 12.85 0 0 1 557.85 255.7Z" fill="#12e266"/></g>
<rect x="540.08" y="256.22" width="9.85" height="4.4" fill="url(#bandg)"/>
<text x="541.6" y="259.08" font-size="4.1" fill="#b6d2b8" font-weight="bold" textLength="7" lengthAdjust="spacingAndGlyphs" transform="rotate(0.04 541.6 259.08)">25%</text>
<rect x="554.73" y="249.27" width="12.85" height="12.85" fill="#1b668f"/>
<rect x="556.23" y="250.77" width="9.85" height="9.85" fill="#0a8a3c"/>
<clipPath id="c12"><rect x="556.23" y="250.77" width="9.85" height="9.85"/></clipPath>
<g clip-path="url(#c12)"><path d="M561.15 255.7L561.15 242.85A12.85 12.85 0 0 1 574 255.7Z" fill="#12e266"/></g>
<rect x="556.23" y="256.22" width="9.85" height="4.4" fill="url(#bandg)"/>
<text x="557.75" y="259.08" font-size="4.1" fill="#b6d2b8" font-weight="bold" textLength="7" lengthAdjust="spacingAndGlyphs" transform="rotate(0.04 557.75 259.08)">25%</text>
<rect x="570.87" y="249.27" width="12.85" height="12.85" fill="#1b668f"/>
<rect x="572.37" y="250.77" width="9.85" height="9.85" fill="#0a8a3c"/>
<clipPath id="c13"><rect x="572.37" y="250.77" width="9.85" height="9.85"/></clipPath>
<g clip-path="url(#c13)"><path d="M577.3 255.7L577.3 242.85A12.85 12.85 0 0 1 590.15 255.7Z" fill="#12e266"/></g>
<rect x="572.37" y="256.22" width="9.85" height="4.4" fill="url(#bandg)"/>
<text x="573.9" y="259.08" font-size="4.1" fill="#b6d2b8" font-weight="bold" textLength="7" lengthAdjust="spacingAndGlyphs" transform="rotate(0.04 573.9 259.08)">25%</text>
<rect x="587.02" y="249.27" width="12.85" height="12.85" fill="#1b668f"/>
<rect x="588.52" y="250.77" width="9.85" height="9.85" fill="#0a8a3c"/>
<clipPath id="c14"><rect x="588.52" y="250.77" width="9.85" height="9.85"/></clipPath>
<g clip-path="url(#c14)"><path d="M593.44 255.7L593.44 242.85A12.85 12.85 0 0 1 606.29 255.7Z" fill="#12e266"/></g>
<rect x="588.52" y="256.22" width="9.85" height="4.4" fill="url(#bandg)"/>
<text x="590.04" y="259.08" font-size="4.1" fill="#b6d2b8" font-weight="bold" textLength="7" lengthAdjust="spacingAndGlyphs" transform="rotate(0.04 590.04 259.08)">25%</text>
<rect x="603.17" y="249.27" width="12.85" height="12.85" fill="#1b668f"/>
<rect x="604.67" y="250.77" width="9.85" height="9.85" fill="#0a8a3c"/>
<clipPath id="c15"><rect x="604.67" y="250.77" width="9.85" height="9.85"/></clipPath>
<g clip-path="url(#c15)"><path d="M609.59 255.7L609.59 242.85A12.85 12.85 0 0 1 622.44 255.7Z" fill="#12e266"/></g>
<rect x="604.67" y="256.22" width="9.85" height="4.4" fill="url(#bandg)"/>
<text x="606.19" y="259.08" font-size="4.1" fill="#b6d2b8" font-weight="bold" textLength="7" lengthAdjust="spacingAndGlyphs" transform="rotate(0.04 606.19 259.08)">25%</text>
<rect x="619.31" y="249.27" width="12.85" height="12.85" fill="#1b668f"/>
<rect x="620.81" y="250.77" width="9.85" height="9.85" fill="#0a8a3c"/>
<clipPath id="c16"><rect x="620.81" y="250.77" width="9.85" height="9.85"/></clipPath>
<g clip-path="url(#c16)"><path d="M625.74 255.7L625.74 242.85A12.85 12.85 0 0 1 638.59 255.7Z" fill="#12e266"/></g>
<rect x="620.81" y="256.22" width="9.85" height="4.4" fill="url(#bandg)"/>
<text x="622.34" y="259.08" font-size="4.1" fill="#b6d2b8" font-weight="bold" textLength="7" lengthAdjust="spacingAndGlyphs" transform="rotate(0.04 622.34 259.08)">25%</text>
<rect x="635.46" y="249.27" width="12.85" height="12.85" fill="#1b668f"/>
<rect x="636.96" y="250.77" width="9.85" height="9.85" fill="#0a8a3c"/>
<clipPath id="c17"><rect x="636.96" y="250.77" width="9.85" height="9.85"/></clipPath>
<g clip-path="url(#c17)"><path d="M641.89 255.7L641.89 242.85A12.85 12.85 0 0 1 654.74 255.7Z" fill="#12e266"/></g>
<rect x="636.96" y="256.22" width="9.85" height="4.4" fill="url(#bandg)"/>
<text x="638.49" y="259.08" font-size="4.1" fill="#b6d2b8" font-weight="bold" textLength="7" lengthAdjust="spacingAndGlyphs" transform="rotate(0.04 638.49 259.08)">25%</text>
<rect x="651.61" y="249.27" width="12.85" height="12.85" fill="#1b668f"/>
<rect x="653.11" y="250.77" width="9.85" height="9.85" fill="#0a8a3c"/>
<clipPath id="c18"><rect x="653.11" y="250.77" width="9.85" height="9.85"/></clipPath>
<g clip-path="url(#c18)"><path d="M658.03 255.7L658.03 242.85A12.85 12.85 0 0 1 670.88 255.7Z" fill="#12e266"/></g>
<rect x="653.11" y="256.22" width="9.85" height="4.4" fill="url(#bandg)"/>
<text x="654.63" y="259.08" font-size="4.1" fill="#b6d2b8" font-weight="bold" textLength="7" lengthAdjust="spacingAndGlyphs" transform="rotate(0.04 654.63 259.08)">25%</text>
<rect x="667.75" y="249.27" width="12.85" height="12.85" fill="#1b668f"/>
<rect x="669.25" y="250.77" width="9.85" height="9.85" fill="#0a8a3c"/>
<clipPath id="c19"><rect x="669.25" y="250.77" width="9.85" height="9.85"/></clipPath>
<g clip-path="url(#c19)"><path d="M674.18 255.7L674.18 242.85A12.85 12.85 0 0 1 687.03 255.7Z" fill="#12e266"/></g>
<rect x="669.25" y="256.22" width="9.85" height="4.4" fill="url(#bandg)"/>
<text x="670.78" y="259.08" font-size="4.1" fill="#b6d2b8" font-weight="bold" textLength="7" lengthAdjust="spacingAndGlyphs" transform="rotate(0.04 670.78 259.08)">25%</text>
<rect x="425.55" y="265.42" width="12.85" height="12.85" fill="#1b668f"/>
<rect x="427.05" y="266.92" width="9.85" height="9.85" fill="#0a8a3c"/>
<clipPath id="c20"><rect x="427.05" y="266.92" width="9.85" height="9.85"/></clipPath>
<g clip-path="url(#c20)"><path d="M431.98 271.84L431.98 258.99A12.85 12.85 0 0 1 440.17 261.94Z" fill="#12e266"/></g>
<rect x="427.05" y="272.37" width="9.85" height="4.4" fill="url(#bandg)"/>
<text x="428.58" y="275.23" font-size="4.1" fill="#b6d2b8" font-weight="bold" textLength="7" lengthAdjust="spacingAndGlyphs" transform="rotate(0.04 428.58 275.23)">11%</text>
<rect x="441.7" y="265.42" width="12.85" height="12.85" fill="#1b668f"/>
<rect x="443.2" y="266.92" width="9.85" height="9.85" fill="#10c858"/>
<rect x="443.2" y="273.17" width="9.85" height="3.6" fill="url(#bandg)"/>
<text x="444.72" y="275.73" font-size="4.1" fill="#b6d2b8" font-weight="bold" textLength="7" lengthAdjust="spacingAndGlyphs" transform="rotate(0.04 444.72 275.73)">26%</text>
<rect x="457.84" y="265.42" width="12.85" height="12.85" fill="#1b668f"/>
<rect x="459.34" y="266.92" width="9.85" height="9.85" fill="#10c858"/>
<rect x="459.34" y="273.17" width="9.85" height="3.6" fill="url(#bandg)"/>
<text x="460.87" y="275.73" font-size="4.1" fill="#b6d2b8" font-weight="bold" textLength="7" lengthAdjust="spacingAndGlyphs" transform="rotate(0.04 460.87 275.73)">26%</text>
<rect x="473.99" y="265.42" width="12.85" height="12.85" fill="#1b668f"/>
<rect x="475.49" y="266.92" width="9.85" height="9.85" fill="#10c858"/>
<rect x="475.49" y="273.17" width="9.85" height="3.6" fill="url(#bandg)"/>
<text x="477.02" y="275.73" font-size="4.1" fill="#b6d2b8" font-weight="bold" textLength="7" lengthAdjust="spacingAndGlyphs" transform="rotate(0.04 477.02 275.73)">26%</text>
<rect x="490.14" y="265.42" width="12.85" height="12.85" fill="#1b668f"/>
<rect x="491.64" y="266.92" width="9.85" height="9.85" fill="#10c858"/>
<rect x="491.64" y="273.17" width="9.85" height="3.6" fill="url(#bandg)"/>
<text x="493.16" y="275.73" font-size="4.1" fill="#b6d2b8" font-weight="bold" textLength="7" lengthAdjust="spacingAndGlyphs" transform="rotate(0.04 493.16 275.73)">26%</text>
<rect x="506.28" y="265.42" width="12.85" height="12.85" fill="#1b668f"/>
<rect x="507.78" y="266.92" width="9.85" height="9.85" fill="#10c858"/>
<rect x="507.78" y="273.17" width="9.85" height="3.6" fill="url(#bandg)"/>
<text x="509.31" y="275.73" font-size="4.1" fill="#b6d2b8" font-weight="bold" textLength="7" lengthAdjust="spacingAndGlyphs" transform="rotate(0.04 509.31 275.73)">26%</text>
<rect x="522.43" y="265.42" width="12.85" height="12.85" fill="#1b668f"/>
<rect x="523.93" y="266.92" width="9.85" height="9.85" fill="#d4123c"/>
<rect x="523.93" y="273.17" width="9.85" height="3.6" fill="url(#bandr)"/>
<text x="525.46" y="275.73" font-size="4.1" fill="#b6d2b8" font-weight="bold" textLength="7" lengthAdjust="spacingAndGlyphs" transform="rotate(0.04 525.46 275.73)">26%</text>
<rect x="538.58" y="265.42" width="12.85" height="12.85" fill="#1b668f"/>
<rect x="540.08" y="266.92" width="9.85" height="9.85" fill="#10c858"/>
<rect x="540.08" y="273.17" width="9.85" height="3.6" fill="url(#bandg)"/>
<text x="541.6" y="275.73" font-size="4.1" fill="#b6d2b8" font-weight="bold" textLength="7" lengthAdjust="spacingAndGlyphs" transform="rotate(0.04 541.6 275.73)">26%</text>
<rect x="554.73" y="265.42" width="12.85" height="12.85" fill="#1b668f"/>
<rect x="556.23" y="266.92" width="9.85" height="9.85" fill="#10c858"/>
<rect x="556.23" y="273.17" width="9.85" height="3.6" fill="url(#bandg)"/>
<text x="557.75" y="275.73" font-size="4.1" fill="#b6d2b8" font-weight="bold" textLength="7" lengthAdjust="spacingAndGlyphs" transform="rotate(0.04 557.75 275.73)">26%</text>
<rect x="570.87" y="265.42" width="12.85" height="12.85" fill="#1b668f"/>
<rect x="572.37" y="266.92" width="9.85" height="9.85" fill="#10c858"/>
<rect x="572.37" y="273.17" width="9.85" height="3.6" fill="url(#bandg)"/>
<text x="573.9" y="275.73" font-size="4.1" fill="#b6d2b8" font-weight="bold" textLength="7" lengthAdjust="spacingAndGlyphs" transform="rotate(0.04 573.9 275.73)">26%</text>
<rect x="587.02" y="265.42" width="12.85" height="12.85" fill="#1b668f"/>
<rect x="588.52" y="266.92" width="9.85" height="9.85" fill="#10c858"/>
<rect x="588.52" y="273.17" width="9.85" height="3.6" fill="url(#bandg)"/>
<text x="590.04" y="275.73" font-size="4.1" fill="#b6d2b8" font-weight="bold" textLength="7" lengthAdjust="spacingAndGlyphs" transform="rotate(0.04 590.04 275.73)">21%</text>
<rect x="603.17" y="265.42" width="12.85" height="12.85" fill="#1b668f"/>
<rect x="604.67" y="266.92" width="9.85" height="9.85" fill="#10c858"/>
<rect x="604.67" y="273.17" width="9.85" height="3.6" fill="url(#bandg)"/>
<text x="606.19" y="275.73" font-size="4.1" fill="#b6d2b8" font-weight="bold" textLength="7" lengthAdjust="spacingAndGlyphs" transform="rotate(0.04 606.19 275.73)">21%</text>
<rect x="619.31" y="265.42" width="12.85" height="12.85" fill="#1b668f"/>
<rect x="620.81" y="266.92" width="9.85" height="9.85" fill="#10c858"/>
<rect x="620.81" y="273.17" width="9.85" height="3.6" fill="url(#bandg)"/>
<text x="622.34" y="275.73" font-size="4.1" fill="#b6d2b8" font-weight="bold" textLength="7" lengthAdjust="spacingAndGlyphs" transform="rotate(0.04 622.34 275.73)">21%</text>
<rect x="635.46" y="265.42" width="12.85" height="12.85" fill="#1b668f"/>
<rect x="636.96" y="266.92" width="9.85" height="9.85" fill="#10c858"/>
<rect x="636.96" y="273.17" width="9.85" height="3.6" fill="url(#bandg)"/>
<text x="638.49" y="275.73" font-size="4.1" fill="#b6d2b8" font-weight="bold" textLength="7" lengthAdjust="spacingAndGlyphs" transform="rotate(0.04 638.49 275.73)">21%</text>
<rect x="651.61" y="265.42" width="12.85" height="12.85" fill="#1b668f"/>
<rect x="653.11" y="266.92" width="9.85" height="9.85" fill="#10c858"/>
<rect x="653.11" y="273.17" width="9.85" height="3.6" fill="url(#bandg)"/>
<text x="654.63" y="275.73" font-size="4.1" fill="#b6d2b8" font-weight="bold" textLength="7" lengthAdjust="spacingAndGlyphs" transform="rotate(0.04 654.63 275.73)">21%</text>
<rect x="667.75" y="265.42" width="12.85" height="12.85" fill="#1b668f"/>
<rect x="669.25" y="266.92" width="9.85" height="9.85" fill="#10c858"/>
<rect x="669.25" y="273.17" width="9.85" height="3.6" fill="url(#bandg)"/>
<text x="670.78" y="275.73" font-size="4.1" fill="#b6d2b8" font-weight="bold" textLength="7" lengthAdjust="spacingAndGlyphs" transform="rotate(0.04 670.78 275.73)">21%</text>
<rect x="425.55" y="281.57" width="12.85" height="12.85" fill="#1b668f"/>
<rect x="427.05" y="283.07" width="9.85" height="9.85" fill="#10c858"/>
<rect x="427.05" y="289.32" width="9.85" height="3.6" fill="url(#bandg)"/>
<text x="428.58" y="291.88" font-size="4.1" fill="#b6d2b8" font-weight="bold" textLength="7" lengthAdjust="spacingAndGlyphs" transform="rotate(0.04 428.58 291.88)">21%</text>
<rect x="441.7" y="281.57" width="12.85" height="12.85" fill="#1b668f"/>
<rect x="443.2" y="283.07" width="9.85" height="9.85" fill="#10c858"/>
<rect x="443.2" y="289.32" width="9.85" height="3.6" fill="url(#bandg)"/>
<text x="444.72" y="291.88" font-size="4.1" fill="#b6d2b8" font-weight="bold" textLength="7" lengthAdjust="spacingAndGlyphs" transform="rotate(0.04 444.72 291.88)">21%</text>
<rect x="457.84" y="281.57" width="12.85" height="12.85" fill="#1b668f"/>
<rect x="459.34" y="283.07" width="9.85" height="9.85" fill="#10c858"/>
<rect x="459.34" y="289.32" width="9.85" height="3.6" fill="url(#bandg)"/>
<text x="460.87" y="291.88" font-size="4.1" fill="#b6d2b8" font-weight="bold" textLength="7" lengthAdjust="spacingAndGlyphs" transform="rotate(0.04 460.87 291.88)">21%</text>
<rect x="473.99" y="281.57" width="12.85" height="12.85" fill="#1b668f"/>
<rect x="475.49" y="283.07" width="9.85" height="9.85" fill="#10c858"/>
<rect x="475.49" y="289.32" width="9.85" height="3.6" fill="url(#bandg)"/>
<text x="477.02" y="291.88" font-size="4.1" fill="#b6d2b8" font-weight="bold" textLength="7" lengthAdjust="spacingAndGlyphs" transform="rotate(0.04 477.02 291.88)">21%</text>
<rect x="490.14" y="281.57" width="12.85" height="12.85" fill="#1b668f"/>
<rect x="491.64" y="283.07" width="9.85" height="9.85" fill="#10c858"/>
<rect x="491.64" y="289.32" width="9.85" height="3.6" fill="url(#bandg)"/>
<text x="494.26" y="291.88" font-size="4.1" fill="#b6d2b8" font-weight="bold" textLength="4.8" lengthAdjust="spacingAndGlyphs" transform="rotate(0.04 494.26 291.88)">8%</text>
<rect x="506.28" y="281.57" width="12.85" height="12.85" fill="#1ab0f6"/>
<rect x="507.98" y="283.27" width="9.45" height="9.45" fill="#12cb5a"/>
<rect x="522.43" y="281.57" width="12.85" height="12.85" fill="#1ab0f6"/>
<rect x="524.13" y="283.27" width="9.45" height="9.45" fill="#12cb5a"/>
<rect x="538.58" y="281.57" width="12.85" height="12.85" fill="#1ab0f6"/>
<rect x="540.28" y="283.27" width="9.45" height="9.45" fill="#12cb5a"/>
<rect x="554.73" y="281.57" width="12.85" height="12.85" fill="#1ab0f6"/>
<rect x="556.43" y="283.27" width="9.45" height="9.45" fill="#12cb5a"/>
<rect x="570.87" y="281.57" width="12.85" height="12.85" fill="#1ab0f6"/>
<rect x="572.57" y="283.27" width="9.45" height="9.45" fill="#12cb5a"/>
<rect x="587.02" y="281.57" width="12.85" height="12.85" fill="#1ab0f6"/>
<rect x="588.72" y="283.27" width="9.45" height="9.45" fill="#12cb5a"/>
<rect x="603.17" y="281.57" width="12.85" height="12.85" fill="#1ab0f6"/>
<rect x="604.87" y="283.27" width="9.45" height="9.45" fill="#12cb5a"/>
<rect x="619.31" y="281.57" width="12.85" height="12.85" fill="#1ab0f6"/>
<rect x="621.01" y="283.27" width="9.45" height="9.45" fill="#12cb5a"/>
<rect x="635.46" y="281.57" width="12.85" height="12.85" fill="#1ab0f6"/>
<rect x="637.16" y="283.27" width="9.45" height="9.45" fill="#12cb5a"/>
<rect x="651.61" y="281.57" width="12.85" height="12.85" fill="#1ab0f6"/>
<rect x="653.31" y="283.27" width="9.45" height="9.45" fill="#12cb5a"/>
<rect x="667.75" y="281.57" width="12.85" height="12.85" fill="#1ab0f6"/>
<rect x="669.46" y="283.27" width="9.45" height="9.45" fill="#12cb5a"/>
<rect x="425.55" y="297.71" width="12.85" height="12.85" fill="#1ab0f6"/>
<rect x="427.25" y="299.41" width="9.45" height="9.45" fill="#12cb5a"/>
<rect x="441.7" y="297.71" width="12.85" height="12.85" fill="#1ab0f6"/>
<rect x="443.4" y="299.41" width="9.45" height="9.45" fill="#12cb5a"/>
<rect x="457.84" y="297.71" width="12.85" height="12.85" fill="#1ab0f6"/>
<rect x="459.54" y="299.41" width="9.45" height="9.45" fill="#12cb5a"/>
<rect x="473.99" y="297.71" width="12.85" height="12.85" fill="#1ab0f6"/>
<rect x="475.69" y="299.41" width="9.45" height="9.45" fill="#12cb5a"/>
<rect x="490.14" y="297.71" width="12.85" height="12.85" fill="#1ab0f6"/>
<rect x="491.84" y="299.41" width="9.45" height="9.45" fill="#12cb5a"/>
<rect x="506.28" y="297.71" width="12.85" height="12.85" fill="#1ab0f6"/>
<rect x="507.98" y="299.41" width="9.45" height="9.45" fill="#12cb5a"/>
<rect x="522.43" y="297.71" width="12.85" height="12.85" fill="#1ab0f6"/>
<rect x="524.13" y="299.41" width="9.45" height="9.45" fill="#12cb5a"/>
<rect x="538.58" y="297.71" width="12.85" height="12.85" fill="#1ab0f6"/>
<rect x="540.28" y="299.41" width="9.45" height="9.45" fill="#4a4a4a"/>
<rect x="554.73" y="297.71" width="12.85" height="12.85" fill="#1ab0f6"/>
<rect x="556.43" y="299.41" width="9.45" height="9.45" fill="#12cb5a"/>
<rect x="570.87" y="297.71" width="12.85" height="12.85" fill="#1ab0f6"/>
<rect x="572.57" y="299.41" width="9.45" height="9.45" fill="#12cb5a"/>
<rect x="587.02" y="297.71" width="12.85" height="12.85" fill="#1ab0f6"/>
<rect x="588.72" y="299.41" width="9.45" height="9.45" fill="#12cb5a"/>
<rect x="603.17" y="297.71" width="12.85" height="12.85" fill="#1ab0f6"/>
<rect x="604.87" y="299.41" width="9.45" height="9.45" fill="#12cb5a"/>
<rect x="619.31" y="297.71" width="12.85" height="12.85" fill="#1ab0f6"/>
<rect x="621.01" y="299.41" width="9.45" height="9.45" fill="#12cb5a"/>
<rect x="635.46" y="297.71" width="12.85" height="12.85" fill="#1ab0f6"/>
<rect x="637.16" y="299.41" width="9.45" height="9.45" fill="#12cb5a"/>
<rect x="651.61" y="297.71" width="12.85" height="12.85" fill="#1ab0f6"/>
<rect x="653.31" y="299.41" width="9.45" height="9.45" fill="#12cb5a"/>
<rect x="667.75" y="297.71" width="12.85" height="12.85" fill="#1ab0f6"/>
<rect x="669.46" y="299.41" width="9.45" height="9.45" fill="#12cb5a"/>
<rect x="425.55" y="313.86" width="12.85" height="12.85" fill="#1ab0f6"/>
<rect x="427.25" y="315.56" width="9.45" height="9.45" fill="#12cb5a"/>
<rect x="441.7" y="313.86" width="12.85" height="12.85" fill="#1ab0f6"/>
<rect x="443.4" y="315.56" width="9.45" height="9.45" fill="#12cb5a"/>
<rect x="457.84" y="313.86" width="12.85" height="12.85" fill="#1ab0f6"/>
<rect x="459.54" y="315.56" width="9.45" height="9.45" fill="#12cb5a"/>
<rect x="473.99" y="313.86" width="12.85" height="12.85" fill="#1ab0f6"/>
<rect x="475.69" y="315.56" width="9.45" height="9.45" fill="#12cb5a"/>
<rect x="490.14" y="313.86" width="12.85" height="12.85" fill="#1ab0f6"/>
<rect x="491.84" y="315.56" width="9.45" height="9.45" fill="#12cb5a"/>
<rect x="506.28" y="313.86" width="12.85" height="12.85" fill="#1ab0f6"/>
<rect x="507.98" y="315.56" width="9.45" height="9.45" fill="#12cb5a"/>
<rect x="522.43" y="313.86" width="12.85" height="12.85" fill="#1ab0f6"/>
<rect x="524.13" y="315.56" width="9.45" height="9.45" fill="#12cb5a"/>
<rect x="538.58" y="313.86" width="12.85" height="12.85" fill="#1ab0f6"/>
<rect x="540.28" y="315.56" width="9.45" height="9.45" fill="#12cb5a"/>
<rect x="554.73" y="313.86" width="12.85" height="12.85" fill="#1ab0f6"/>
<rect x="556.43" y="315.56" width="9.45" height="9.45" fill="#12cb5a"/>
<rect x="570.87" y="313.86" width="12.85" height="12.85" fill="#1ab0f6"/>
<rect x="572.57" y="315.56" width="9.45" height="9.45" fill="#12cb5a"/>
<rect x="587.02" y="313.86" width="12.85" height="12.85" fill="#1ab0f6"/>
<rect x="588.72" y="315.56" width="9.45" height="9.45" fill="#12cb5a"/>
<rect x="603.17" y="313.86" width="12.85" height="12.85" fill="#1ab0f6"/>
<rect x="604.87" y="315.56" width="9.45" height="9.45" fill="#12cb5a"/>
<rect x="619.31" y="313.86" width="12.85" height="12.85" fill="#1ab0f6"/>
<rect x="621.01" y="315.56" width="9.45" height="9.45" fill="#12cb5a"/>
<rect x="635.46" y="313.86" width="12.85" height="12.85" fill="#1ab0f6"/>
<rect x="637.16" y="315.56" width="9.45" height="9.45" fill="#12cb5a"/>
<rect x="651.61" y="313.86" width="12.85" height="12.85" fill="#1ab0f6"/>
<rect x="653.31" y="315.56" width="9.45" height="9.45" fill="#12cb5a"/>
<rect x="667.75" y="313.86" width="12.85" height="12.85" fill="#1ab0f6"/>
<rect x="669.46" y="315.56" width="9.45" height="9.45" fill="#12cb5a"/>
<rect x="425.55" y="330.01" width="12.85" height="12.85" fill="#1ab0f6"/>
<rect x="427.25" y="331.71" width="9.45" height="9.45" fill="#12cb5a"/>
<rect x="441.7" y="330.01" width="12.85" height="12.85" fill="#1ab0f6"/>
<rect x="443.4" y="331.71" width="9.45" height="9.45" fill="#12cb5a"/>
<rect x="457.84" y="330.01" width="12.85" height="12.85" fill="#1ab0f6"/>
<rect x="459.54" y="331.71" width="9.45" height="9.45" fill="#12cb5a"/>
<rect x="473.99" y="330.01" width="12.85" height="12.85" fill="#1ab0f6"/>
<rect x="475.69" y="331.71" width="9.45" height="9.45" fill="#12cb5a"/>
<rect x="490.14" y="330.01" width="12.85" height="12.85" fill="#1ab0f6"/>
<rect x="491.84" y="331.71" width="9.45" height="9.45" fill="#12cb5a"/>
<rect x="506.28" y="330.01" width="12.85" height="12.85" fill="#1ab0f6"/>
<rect x="507.98" y="331.71" width="9.45" height="9.45" fill="#12cb5a"/>
<rect x="522.43" y="330.01" width="12.85" height="12.85" fill="#1ab0f6"/>
<rect x="524.13" y="331.71" width="9.45" height="9.45" fill="#12cb5a"/>
<rect x="538.58" y="330.01" width="12.85" height="12.85" fill="#1ab0f6"/>
<rect x="540.28" y="331.71" width="9.45" height="9.45" fill="#12cb5a"/>
<rect x="554.73" y="330.01" width="12.85" height="12.85" fill="#1ab0f6"/>
<rect x="556.43" y="331.71" width="9.45" height="9.45" fill="#12cb5a"/>
<rect x="570.87" y="330.01" width="12.85" height="12.85" fill="#1ab0f6"/>
<rect x="572.57" y="331.71" width="9.45" height="9.45" fill="#d09410"/>
<rect x="587.02" y="330.01" width="12.85" height="12.85" fill="#1ab0f6"/>
<rect x="588.72" y="331.71" width="9.45" height="9.45" fill="#12cb5a"/>
<rect x="603.17" y="330.01" width="12.85" height="12.85" fill="#1ab0f6"/>
<rect x="604.87" y="331.71" width="9.45" height="9.45" fill="#12cb5a"/>
<rect x="619.31" y="330.01" width="12.85" height="12.85" fill="#1ab0f6"/>
<rect x="621.01" y="331.71" width="9.45" height="9.45" fill="#12cb5a"/>
<rect x="635.46" y="330.01" width="12.85" height="12.85" fill="#1ab0f6"/>
<rect x="637.16" y="331.71" width="9.45" height="9.45" fill="#12cb5a"/>
<rect x="651.61" y="330.01" width="12.85" height="12.85" fill="#1ab0f6"/>
<rect x="653.31" y="331.71" width="9.45" height="9.45" fill="#12cb5a"/>
<rect x="667.75" y="330.01" width="12.85" height="12.85" fill="#1ab0f6"/>
<rect x="669.46" y="331.71" width="9.45" height="9.45" fill="#12cb5a"/>
<rect x="425.55" y="346.15" width="12.85" height="12.85" fill="#1ab0f6"/>
<rect x="427.25" y="347.85" width="9.45" height="9.45" fill="#12cb5a"/>
<rect x="441.7" y="346.15" width="12.85" height="12.85" fill="#1ab0f6"/>
<rect x="443.4" y="347.85" width="9.45" height="9.45" fill="#12cb5a"/>
<rect x="457.84" y="346.15" width="12.85" height="12.85" fill="#1ab0f6"/>
<rect x="459.54" y="347.85" width="9.45" height="9.45" fill="#12cb5a"/>
<rect x="473.99" y="346.15" width="12.85" height="12.85" fill="#1ab0f6"/>
<rect x="475.69" y="347.85" width="9.45" height="9.45" fill="#12cb5a"/>
<rect x="490.14" y="346.15" width="12.85" height="12.85" fill="#1ab0f6"/>
<rect x="491.84" y="347.85" width="9.45" height="9.45" fill="#12cb5a"/>
<rect x="506.28" y="346.15" width="12.85" height="12.85" fill="#1ab0f6"/>
<rect x="507.98" y="347.85" width="9.45" height="9.45" fill="#12cb5a"/>
<rect x="522.43" y="346.15" width="12.85" height="12.85" fill="#1ab0f6"/>
<rect x="524.13" y="347.85" width="9.45" height="9.45" fill="#12cb5a"/>
<rect x="538.58" y="346.15" width="12.85" height="12.85" fill="#1ab0f6"/>
<rect x="540.28" y="347.85" width="9.45" height="9.45" fill="#12cb5a"/>
<rect x="554.73" y="346.15" width="12.85" height="12.85" fill="#1ab0f6"/>
<rect x="556.43" y="347.85" width="9.45" height="9.45" fill="#12cb5a"/>
<rect x="570.87" y="346.15" width="12.85" height="12.85" fill="#1ab0f6"/>
<rect x="572.57" y="347.85" width="9.45" height="9.45" fill="#12cb5a"/>
<rect x="587.02" y="346.15" width="12.85" height="12.85" fill="#1ab0f6"/>
<rect x="588.72" y="347.85" width="9.45" height="9.45" fill="#12cb5a"/>
<rect x="603.17" y="346.15" width="12.85" height="12.85" fill="#1ab0f6"/>
<rect x="604.87" y="347.85" width="9.45" height="9.45" fill="#12cb5a"/>
<rect x="619.31" y="346.15" width="12.85" height="12.85" fill="#1ab0f6"/>
<rect x="621.01" y="347.85" width="9.45" height="9.45" fill="#12cb5a"/>
<rect x="635.46" y="346.15" width="12.85" height="12.85" fill="#1ab0f6"/>
<rect x="637.16" y="347.85" width="9.45" height="9.45" fill="#12cb5a"/>
<rect x="651.61" y="346.15" width="12.85" height="12.85" fill="#1ab0f6"/>
<rect x="653.31" y="347.85" width="9.45" height="9.45" fill="#12cb5a"/>
<rect x="667.75" y="346.15" width="12.85" height="12.85" fill="#1ab0f6"/>
<rect x="669.46" y="347.85" width="9.45" height="9.45" fill="#12cb5a"/>
<text x="434" y="402.58" font-size="4.6" fill="#a2a2a2" stroke="#a2a2a2" stroke-width="0.22" textLength="19" lengthAdjust="spacingAndGlyphs" transform="rotate(0.04 434 402.58)">LEGEND:</text>
<rect x="434" y="407.9" width="6.6" height="6.6" fill="#585858"/>
<rect x="435.5" y="409.4" width="3.6" height="3.6" fill="#4e4e4e"/>
<text x="443.6" y="412.58" font-size="4" fill="#a2a2a2" stroke="#a2a2a2" stroke-width="0.22" textLength="28.8" lengthAdjust="spacingAndGlyphs" transform="rotate(0.04 443.6 412.58)">NOT AVAILABLE</text>
<rect x="482.6" y="397.8" width="6.6" height="6.6" fill="#1ae468"/>
<rect x="484.1" y="399.3" width="3.6" height="3.6" fill="#14c85a"/>
<text x="492.2" y="402.48" font-size="4" fill="#a2a2a2" stroke="#a2a2a2" stroke-width="0.22" textLength="10.8" lengthAdjust="spacingAndGlyphs" transform="rotate(0.04 492.2 402.48)">GOOD</text>
<rect x="482.6" y="407.9" width="6.6" height="6.6" fill="#12bc50"/>
<rect x="484.1" y="409.4" width="3.6" height="3.6" fill="#0e9c44"/>
<text x="492.2" y="412.58" font-size="4" fill="#a2a2a2" stroke="#a2a2a2" stroke-width="0.22" textLength="24.8" lengthAdjust="spacingAndGlyphs" transform="rotate(0.04 492.2 412.58)">WARMING UP</text>
<rect x="531.4" y="397.8" width="6.6" height="6.6" fill="#10709f"/>
<rect x="532.9" y="399.3" width="3.6" height="3.6" fill="#0d5f8a"/>
<text x="540.6" y="402.48" font-size="4" fill="#a2a2a2" stroke="#a2a2a2" stroke-width="0.22" textLength="18" lengthAdjust="spacingAndGlyphs" transform="rotate(0.04 540.6 402.48)">STANDBY</text>
<rect x="531.4" y="407.9" width="6.6" height="6.6" fill="#1ea6ec"/>
<rect x="532.9" y="409.4" width="3.6" height="3.6" fill="#188ccc"/>
<text x="540.6" y="412.58" font-size="4" fill="#a2a2a2" stroke="#a2a2a2" stroke-width="0.22" textLength="29.4" lengthAdjust="spacingAndGlyphs" transform="rotate(0.04 540.6 412.58)">COOLING DOWN</text>
<rect x="580" y="397.8" width="6.6" height="6.6" fill="#e8a814"/>
<rect x="581.5" y="399.3" width="3.6" height="3.6" fill="#cc9010"/>
<text x="589.6" y="402.48" font-size="4" fill="#a2a2a2" stroke="#a2a2a2" stroke-width="0.22" textLength="18" lengthAdjust="spacingAndGlyphs" transform="rotate(0.04 589.6 402.48)">WARNING</text>
<rect x="580" y="407.9" width="6.6" height="6.6" fill="#e8cc54"/>
<rect x="581.5" y="409.4" width="3.6" height="3.6" fill="#ccb246"/>
<text x="589.6" y="412.58" font-size="4" fill="#a2a2a2" stroke="#a2a2a2" stroke-width="0.22" textLength="23.8" lengthAdjust="spacingAndGlyphs" transform="rotate(0.04 589.6 412.58)">CONNECTING</text>
<rect x="628.8" y="397.8" width="6.6" height="6.6" fill="#e0123c"/>
<rect x="630.3" y="399.3" width="3.6" height="3.6" fill="#c00e32"/>
<text x="638" y="402.48" font-size="4" fill="#a2a2a2" stroke="#a2a2a2" stroke-width="0.22" textLength="13" lengthAdjust="spacingAndGlyphs" transform="rotate(0.04 638 402.48)">ERROR</text>
<rect x="628.8" y="407.9" width="6.6" height="6.6" fill="#a01ce0"/>
<rect x="630.3" y="409.4" width="3.6" height="3.6" fill="#8414bc"/>
<text x="638" y="412.58" font-size="4" fill="#a2a2a2" stroke="#a2a2a2" stroke-width="0.22" textLength="32.6" lengthAdjust="spacingAndGlyphs" transform="rotate(0.04 638 412.58)">SHUTTER CLOSED</text>
</g>
<g id="window-edge">
<rect x="417.95" y="78" width="1.15" height="342.3" fill="#171717"/>
<rect x="1.2" y="78" width="688.8" height="1.1" fill="#232120"/>
<rect x="1.2" y="419.95" width="688.8" height="0.5" fill="#161616"/>
</g>
</svg>
</body></html>
